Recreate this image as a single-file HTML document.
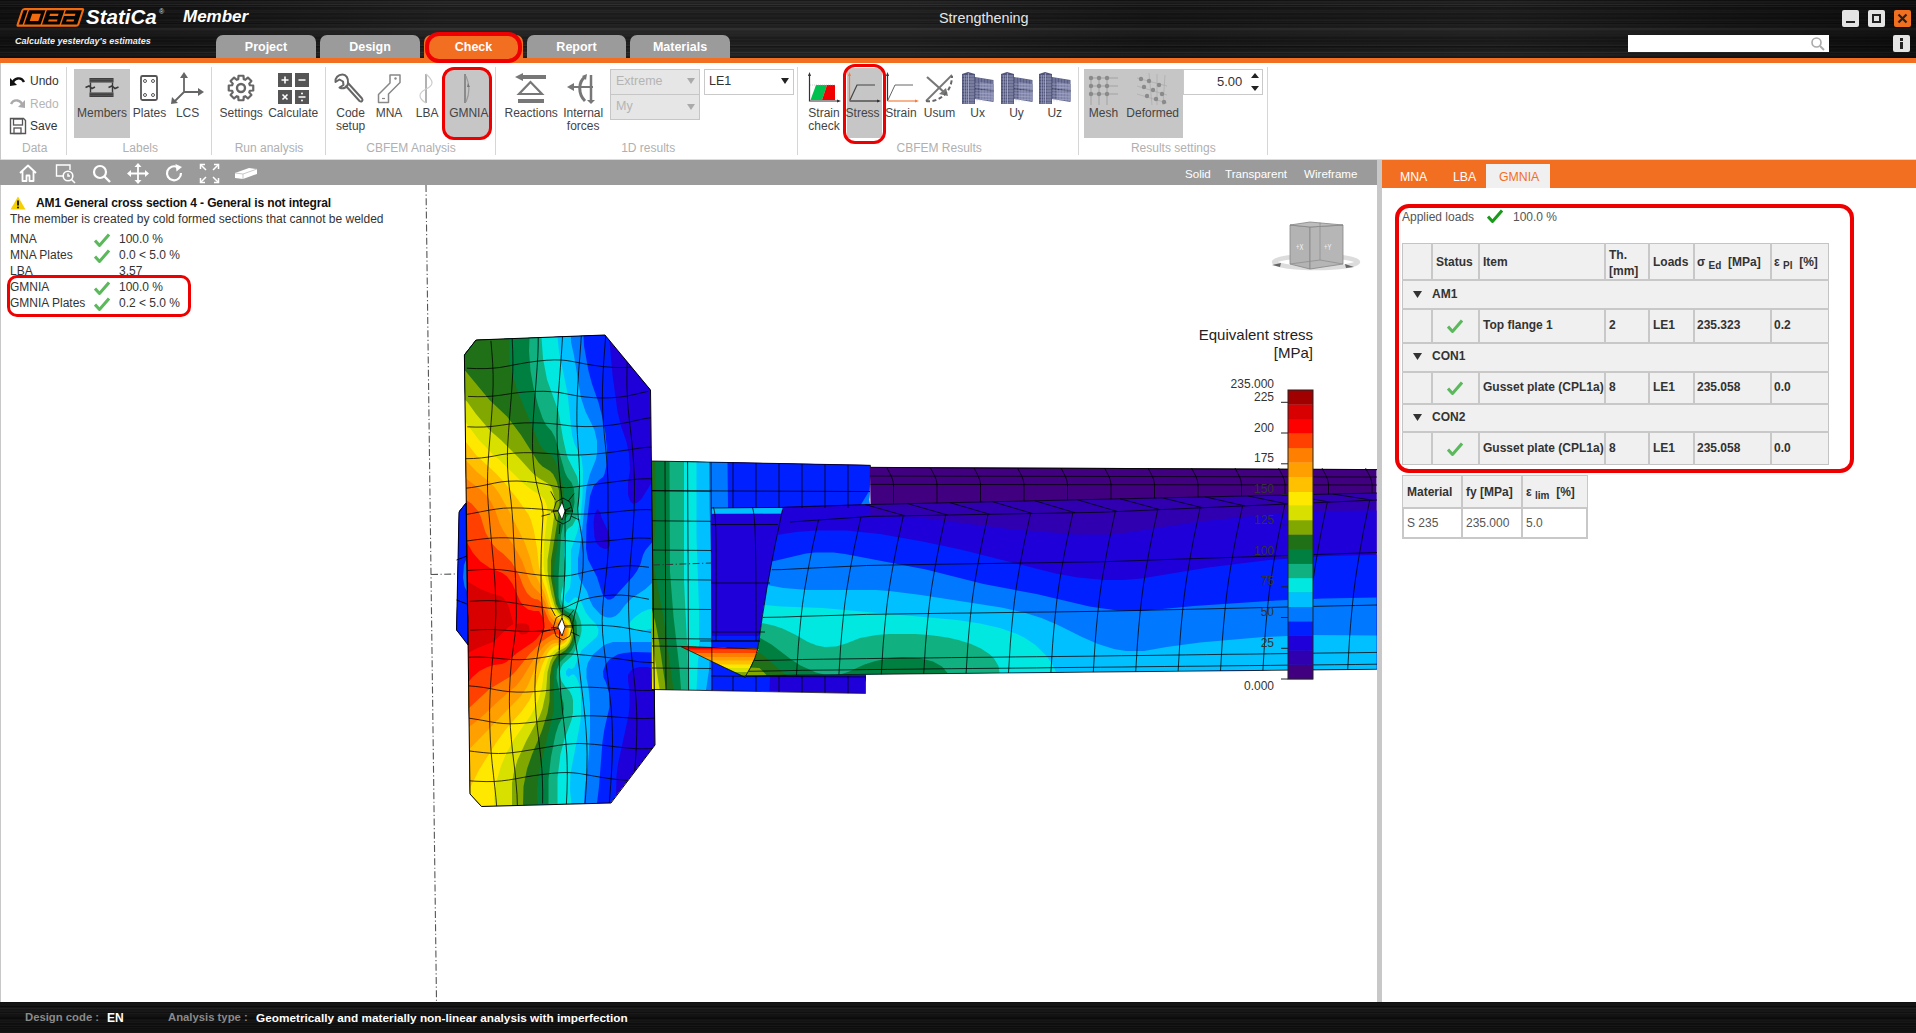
<!DOCTYPE html>
<html><head><meta charset="utf-8">
<style>
*{margin:0;padding:0;box-sizing:border-box}
html,body{width:1916px;height:1033px;overflow:hidden;background:#fff;font-family:"Liberation Sans",sans-serif;position:relative}
.a{position:absolute}
.dark{background:#0d0d0d;background-image:
repeating-linear-gradient(180deg,rgba(255,255,255,0) 0px,rgba(255,255,255,.05) 1px,rgba(255,255,255,0) 2px,rgba(0,0,0,0) 3px,rgba(255,255,255,.03) 5px,rgba(0,0,0,0) 7px);}
.tab{position:absolute;top:35px;height:24px;width:100px;background:#9b9b9b;border-radius:7px 7px 0 0;color:#fff;font-weight:bold;font-size:12.5px;text-align:center;line-height:24px}
.redbox{position:absolute;border:3.8px solid #ee0000;border-radius:11px}
.rl{position:absolute;font-size:12px;color:#444;white-space:nowrap}
.gl{position:absolute;font-size:12px;color:#b0b0b0;white-space:nowrap;top:141px}
.sep{position:absolute;top:67px;width:1px;height:88px;background:#d6d6d6}
.hl{position:absolute;background:#c6c6c6}
.lp{position:absolute;font-size:12px;color:#222;white-space:nowrap}
</style></head><body>
<!-- title bar -->
<div class="a" style="left:0;top:0;width:1916px;height:58px;background:linear-gradient(180deg,rgb(20,20,20) 0.0px,rgb(18,18,18) 0.5px,rgb(25,25,25) 1.0px,rgb(33,33,33) 1.5px,rgb(36,36,36) 2.0px,rgb(31,31,31) 2.5px,rgb(24,24,24) 3.0px,rgb(25,25,25) 3.5px,rgb(35,35,35) 4.0px,rgb(40,40,40) 4.5px,rgb(31,31,31) 5.0px,rgb(20,20,20) 5.5px,rgb(24,24,24) 6.0px,rgb(35,35,35) 6.5px,rgb(29,29,29) 7.0px,rgb(19,19,19) 7.5px,rgb(20,20,20) 8.0px,rgb(20,20,20) 8.5px,rgb(20,20,20) 9.0px,rgb(22,22,22) 9.5px,rgb(25,25,25) 10.0px,rgb(29,29,29) 10.5px,rgb(28,28,28) 11.0px,rgb(26,26,26) 11.5px,rgb(31,31,31) 12.0px,rgb(30,30,30) 12.5px,rgb(21,21,21) 13.0px,rgb(20,20,20) 13.5px,rgb(22,22,22) 14.0px,rgb(21,21,21) 14.5px,rgb(21,21,21) 15.0px,rgb(25,25,25) 15.5px,rgb(28,28,28) 16.0px,rgb(24,24,24) 16.5px,rgb(21,21,21) 17.0px,rgb(20,20,20) 17.5px,rgb(18,18,18) 18.0px,rgb(19,19,19) 18.5px,rgb(23,23,23) 19.0px,rgb(26,26,26) 19.5px,rgb(34,34,34) 20.0px,rgb(30,30,30) 20.5px,rgb(20,20,20) 21.0px,rgb(21,21,21) 21.5px,rgb(23,23,23) 22.0px,rgb(26,26,26) 22.5px,rgb(23,23,23) 23.0px,rgb(17,17,17) 23.5px,rgb(21,21,21) 24.0px,rgb(29,29,29) 24.5px,rgb(30,30,30) 25.0px,rgb(27,27,27) 25.5px,rgb(26,26,26) 26.0px,rgb(24,24,24) 26.5px,rgb(21,21,21) 27.0px,rgb(27,27,27) 27.5px,rgb(36,36,36) 28.0px,rgb(42,42,42) 28.5px,rgb(45,45,45) 29.0px,rgb(41,41,41) 29.5px,rgb(37,37,37) 30.0px,rgb(34,34,34) 30.5px,rgb(27,27,27) 31.0px,rgb(30,30,30) 31.5px,rgb(35,35,35) 32.0px,rgb(31,31,31) 32.5px,rgb(28,28,28) 33.0px,rgb(31,31,31) 33.5px,rgb(31,31,31) 34.0px,rgb(28,28,28) 34.5px,rgb(27,27,27) 35.0px,rgb(30,30,30) 35.5px,rgb(27,27,27) 36.0px,rgb(26,26,26) 36.5px,rgb(27,27,27) 37.0px,rgb(21,21,21) 37.5px,rgb(15,15,15) 38.0px,rgb(21,21,21) 38.5px,rgb(29,29,29) 39.0px,rgb(27,27,27) 39.5px,rgb(19,19,19) 40.0px,rgb(21,21,21) 40.5px,rgb(25,25,25) 41.0px,rgb(20,20,20) 41.5px,rgb(20,20,20) 42.0px,rgb(25,25,25) 42.5px,rgb(23,23,23) 43.0px,rgb(23,23,23) 43.5px,rgb(26,26,26) 44.0px,rgb(26,26,26) 44.5px,rgb(31,31,31) 45.0px,rgb(34,34,34) 45.5px,rgb(26,26,26) 46.0px,rgb(15,15,15) 46.5px,rgb(14,14,14) 47.0px,rgb(21,21,21) 47.5px,rgb(27,27,27) 48.0px,rgb(28,28,28) 48.5px,rgb(25,25,25) 49.0px,rgb(23,23,23) 49.5px,rgb(22,22,22) 50.0px,rgb(24,24,24) 50.5px,rgb(27,27,27) 51.0px,rgb(27,27,27) 51.5px,rgb(33,33,33) 52.0px,rgb(41,41,41) 52.5px,rgb(32,32,32) 53.0px,rgb(26,26,26) 53.5px,rgb(35,35,35) 54.0px,rgb(33,33,33) 54.5px,rgb(27,27,27) 55.0px,rgb(31,31,31) 55.5px,rgb(29,29,29) 56.0px,rgb(23,23,23) 56.5px,rgb(21,21,21) 57.0px,rgb(21,21,21) 57.5px)"></div><div class="a" style="left:0;top:0;width:1916px;height:58px;background:linear-gradient(90deg,rgba(0,0,0,.3) 0px,rgba(0,0,0,.1) 200px,rgba(255,255,255,.03) 450px,rgba(255,255,255,.03) 900px,rgba(0,0,0,.08) 1150px,rgba(255,255,255,.02) 1500px,rgba(0,0,0,.2) 1750px,rgba(0,0,0,.45) 1916px)"></div>
<!-- logo -->
<svg class="a" style="left:0;top:0" width="100" height="32" viewBox="0 0 100 32"><g transform="translate(0,26.8) skewX(-18.5) translate(0,-26.8)"><rect x="16.9" y="9.1" width="60.6" height="16.6" rx="1.5" fill="#050505" stroke="#f06a10" stroke-width="2.2"/><path d="M22.7 10V25M40.6 10V25M59.6 10V25" stroke="#f06a10" stroke-width="1.5"/><rect x="27.8" y="13.8" width="8.7" height="7.3" fill="#f06a10"/><rect x="45.7" y="13.8" width="8.5" height="2.1" fill="#f06a10"/><rect x="46.3" y="19.4" width="8.8" height="2.1" fill="#f06a10"/><rect x="60" y="13.8" width="11.1" height="2.1" fill="#f06a10"/><rect x="64.3" y="19.4" width="7.5" height="2.1" fill="#f06a10"/></g></svg>
<div class="a" style="left:86px;top:5px;font:italic bold 20.5px 'Liberation Sans',sans-serif;color:#fff">StatiCa</div>
<div class="a" style="left:159px;top:8px;font-size:7px;color:#ddd">&reg;</div>
<div class="a" style="left:183px;top:7px;font:italic bold 17px 'Liberation Sans',sans-serif;color:#fff">Member</div>
<div class="a" style="left:15px;top:36px;font:italic bold 9px 'Liberation Sans',sans-serif;color:#eee">Calculate yesterday's estimates</div>
<div class="a" style="left:939px;top:10px;font-size:14.4px;color:#e6e6e6">Strengthening</div>
<!-- window buttons -->
<div class="a" style="left:1842px;top:10px;width:17px;height:17px;background:#e4e4e4;border-radius:2px"><div class="a" style="left:4px;top:11px;width:9px;height:2px;background:#222"></div></div>
<div class="a" style="left:1868px;top:10px;width:17px;height:17px;background:#e4e4e4;border-radius:2px"><div class="a" style="left:4px;top:4px;width:9px;height:9px;border:2px solid #222"></div></div>
<div class="a" style="left:1894px;top:10px;width:17px;height:17px;background:#f07020;border-radius:2px"><svg class="a" style="left:0;top:0" width="17" height="17"><path d="M4.5 4.5L12.5 12.5M12.5 4.5L4.5 12.5" stroke="#222" stroke-width="2.2"/></svg></div>
<div class="a" style="left:1628px;top:35px;width:201px;height:17px;background:#fff"><svg class="a" style="left:182px;top:1px" width="16" height="15"><circle cx="6.5" cy="6.5" r="4.5" fill="none" stroke="#aaa" stroke-width="1.6"/><path d="M10 10L14 14" stroke="#aaa" stroke-width="2"/></svg></div>
<div class="a" style="left:1893px;top:35px;width:17px;height:17px;background:#e4e4e4;border-radius:2px"><div class="a" style="left:7px;top:3px;width:3px;height:3px;background:#222"></div><div class="a" style="left:7px;top:7px;width:3px;height:7px;background:#222"></div></div>
<!-- tabs -->
<div class="tab" style="left:216px">Project</div>
<div class="tab" style="left:320px">Design</div>
<div class="tab" style="left:424px;width:99px;background:#f26f22">Check</div>
<div class="tab" style="left:527px;width:99px">Report</div>
<div class="tab" style="left:630px">Materials</div>
<div class="a" style="left:0;top:58px;width:1916px;height:5px;background:#f26f22"></div>
<div class="redbox" style="left:425px;top:32px;width:97px;height:31px;border-radius:14px;border-width:4px"></div>
<!-- ribbon -->
<div class="a" style="left:0;top:159px;width:1916px;height:1px;background:#d7dde3"></div>
<div class="a" style="left:0;top:63px;width:1px;height:939px;background:#c8c8c8"></div>
<div class="sep" style="left:66px"></div>
<div class="sep" style="left:211px"></div>
<div class="sep" style="left:325px"></div>
<div class="sep" style="left:495px"></div>
<div class="sep" style="left:797px"></div>
<div class="sep" style="left:1078px"></div>
<div class="sep" style="left:1267px"></div>
<div class="hl" style="left:74px;top:69px;width:56px;height:69px"></div>
<div class="hl" style="left:445px;top:70px;width:44px;height:67px"></div>
<div class="hl" style="left:847px;top:68px;width:35px;height:70px"></div>
<div class="hl" style="left:1084px;top:69px;width:99px;height:69px"></div>
<div class="rl" style="left:30px;top:74px;font-size:12px;color:#333">Undo</div>
<div class="rl" style="left:30px;top:97px;font-size:12px;color:#b5b5b5">Redo</div>
<div class="rl" style="left:30px;top:119px;font-size:12px;color:#333">Save</div>
<svg class="a" style="left:9px;top:75px" width="17" height="12" viewBox="0 0 17 12"><path d="M3 9 C5 3 12 1 15 7" fill="none" stroke="#111" stroke-width="2.4"/><path d="M1 3 L1 11 L8 10 Z" fill="#111"/></svg>
<svg class="a" style="left:9px;top:97px" width="17" height="12" viewBox="0 0 17 12"><path d="M14 9 C12 3 5 1 2 7" fill="none" stroke="#aaa" stroke-width="2.4"/><path d="M16 3 L16 11 L9 10 Z" fill="#aaa"/></svg>
<svg class="a" style="left:9px;top:117px" width="18" height="18" viewBox="0 0 18 18"><path d="M1.5 1.5h13l2 2v13h-15z" fill="none" stroke="#555" stroke-width="1.4"/><rect x="4.5" y="2" width="9" height="6" fill="none" stroke="#555" stroke-width="1.3"/><rect x="5" y="11" width="7" height="5.5" fill="none" stroke="#555" stroke-width="1.3"/></svg>
<svg class="a" style="left:85px;top:76px" width="34" height="23" viewBox="0 0 34 23"><rect x="4.5" y="2" width="24" height="4.5" fill="#3a3a3a"/><rect x="4.5" y="16.5" width="24" height="4.5" fill="#3a3a3a"/><path d="M4.5 3.3H28.5M4.5 5.2H28.5M4.5 17.8H28.5M4.5 19.7H28.5" stroke="#777" stroke-width=".5"/><path d="M5.5 6.5V16.5M27.5 6.5V16.5" stroke="#3a3a3a" stroke-width="1.4"/><path d="M0.5 11.5L4 10L7 12.5L10 11" fill="none" stroke="#3a3a3a" stroke-width="1.6"/><path d="M23.5 11.5L27 10L30 12.5L33.5 11" fill="none" stroke="#3a3a3a" stroke-width="1.6"/></svg>
<svg class="a" style="left:139px;top:74px" width="20" height="28" viewBox="0 0 20 28"><rect x="2" y="2" width="16" height="24" rx="1.5" fill="none" stroke="#555" stroke-width="1.8"/><circle cx="6" cy="7" r="1.5" fill="none" stroke="#555"/><circle cx="14" cy="7" r="1.5" fill="none" stroke="#555"/><circle cx="6" cy="21" r="1.5" fill="none" stroke="#555"/><circle cx="14" cy="21" r="1.5" fill="none" stroke="#555"/></svg>
<svg class="a" style="left:170px;top:72px" width="34" height="33" viewBox="0 0 34 33"><path d="M14 20V5M14 20H29M14 20L4 30" stroke="#666" stroke-width="1.8" fill="none"/><path d="M10 6L14 0L18 6Z M28 16L34 20L28 24Z M2 25L1 32L8 31Z" fill="#666"/></svg>
<div class="rl" style="left:62.0px;top:106px;width:80px;text-align:center">Members</div>
<div class="rl" style="left:109.5px;top:106px;width:80px;text-align:center">Plates</div>
<div class="rl" style="left:147.6px;top:106px;width:80px;text-align:center">LCS</div>
<div class="rl" style="left:201.2px;top:106px;width:80px;text-align:center">Settings</div>
<div class="rl" style="left:253.2px;top:106px;width:80px;text-align:center">Calculate</div>
<div class="rl" style="left:310.6px;top:106px;width:80px;text-align:center">Code</div>
<div class="rl" style="left:349.0px;top:106px;width:80px;text-align:center">MNA</div>
<div class="rl" style="left:387.2px;top:106px;width:80px;text-align:center">LBA</div>
<div class="rl" style="left:428.8px;top:106px;width:80px;text-align:center">GMNIA</div>
<div class="rl" style="left:491.2px;top:106px;width:80px;text-align:center">Reactions</div>
<div class="rl" style="left:543.2px;top:106px;width:80px;text-align:center">Internal</div>
<div class="rl" style="left:784.0px;top:106px;width:80px;text-align:center">Strain</div>
<div class="rl" style="left:822.6px;top:106px;width:80px;text-align:center">Stress</div>
<div class="rl" style="left:860.9px;top:106px;width:80px;text-align:center">Strain</div>
<div class="rl" style="left:899.5px;top:106px;width:80px;text-align:center">Usum</div>
<div class="rl" style="left:937.7px;top:106px;width:80px;text-align:center">Ux</div>
<div class="rl" style="left:976.5px;top:106px;width:80px;text-align:center">Uy</div>
<div class="rl" style="left:1014.8px;top:106px;width:80px;text-align:center">Uz</div>
<div class="rl" style="left:1063.5px;top:106px;width:80px;text-align:center">Mesh</div>
<div class="rl" style="left:1112.7px;top:106px;width:80px;text-align:center">Deformed</div>
<div class="rl" style="left:310.6px;top:119px;width:80px;text-align:center">setup</div>
<div class="rl" style="left:543.2px;top:119px;width:80px;text-align:center">forces</div>
<div class="rl" style="left:784.0px;top:119px;width:80px;text-align:center">check</div>
<div class="gl" style="left:-25.3px;width:120px;text-align:center">Data</div>
<div class="gl" style="left:80.3px;width:120px;text-align:center">Labels</div>
<div class="gl" style="left:209.0px;width:120px;text-align:center">Run analysis</div>
<div class="gl" style="left:351.0px;width:120px;text-align:center">CBFEM Analysis</div>
<div class="gl" style="left:588.2px;width:120px;text-align:center">1D results</div>
<div class="gl" style="left:879.2px;width:120px;text-align:center">CBFEM Results</div>
<div class="gl" style="left:1113.3px;width:120px;text-align:center">Results settings</div>
<svg class="a" style="left:227px;top:74px" width="28" height="28" viewBox="0 0 28 28"><path d="M22.88 11.25 L26.25 11.52 L26.25 16.48 L22.88 16.75 L22.23 18.34 L24.42 20.91 L20.91 24.42 L18.34 22.23 L16.75 22.88 L16.48 26.25 L11.52 26.25 L11.25 22.88 L9.66 22.23 L7.09 24.42 L3.58 20.91 L5.77 18.34 L5.12 16.75 L1.75 16.48 L1.75 11.52 L5.12 11.25 L5.77 9.66 L3.58 7.09 L7.09 3.58 L9.66 5.77 L11.25 5.12 L11.52 1.75 L16.48 1.75 L16.75 5.12 L18.34 5.77 L20.91 3.58 L24.42 7.09 L22.23 9.66Z" fill="none" stroke="#666" stroke-width="2.2" stroke-linejoin="round"/><circle cx="14" cy="14" r="4" fill="none" stroke="#666" stroke-width="2.4"/></svg>
<svg class="a" style="left:278px;top:73px" width="31" height="31" viewBox="0 0 31 31"><rect x="0" y="0" width="14" height="14" fill="#555"/><rect x="17" y="0" width="14" height="14" fill="#555"/><rect x="0" y="17" width="14" height="14" fill="#555"/><rect x="17" y="17" width="14" height="14" fill="#555"/><path d="M7 3.5v7M3.5 7h7M20.5 7h7M4.5 21.5l5 5M9.5 21.5l-5 5M20.5 24h7" stroke="#fff" stroke-width="1.6"/><circle cx="24" cy="20.5" r="1" fill="#fff"/><circle cx="24" cy="27.5" r="1" fill="#fff"/></svg>
<svg class="a" style="left:334px;top:73px" width="32" height="31" viewBox="0 0 32 31"><path d="M8.5 1.5 C4 1.5 1 5 1.5 9 L5.5 6.5 L9 8.5 L9.5 12 L5.5 14.5 C9.5 16.5 14 14 14 10 L28 25.5 C29.5 27.5 27.5 29.5 25.5 28 L11.5 12.5 M14 10 C14.5 5 12 1.5 8.5 1.5" fill="none" stroke="#666" stroke-width="2" stroke-linejoin="round"/></svg>
<svg class="a" style="left:377px;top:73px" width="25" height="31" viewBox="0 0 25 31"><path d="M13 2 H23 V9.5 L11.5 21 V29.5 H1.5 V21.5 L13 10 Z" fill="none" stroke="#888" stroke-width="1.5" stroke-linejoin="round"/><circle cx="18.5" cy="5.5" r="1.2" fill="#888"/><path d="M5 25.5H8" stroke="#888" stroke-width="1.2"/></svg>
<svg class="a" style="left:417px;top:73px" width="18" height="31" viewBox="0 0 18 31"><path d="M9 1v29" stroke="#999" stroke-width="1.5"/><path d="M9 1 C17 8 17 12 9 16 C1 20 1 25 9 30" fill="none" stroke="#ccc" stroke-width="1.2"/></svg>
<svg class="a" style="left:458px;top:73px" width="18" height="31" viewBox="0 0 18 31"><path d="M7 1v29" stroke="#777" stroke-width="1.5"/><path d="M8 3 C12 12 12 20 8 29" fill="none" stroke="#999" stroke-width="1.2"/><path d="M10 10l2 4-3 0z" fill="#777"/></svg>
<svg class="a" style="left:515px;top:72px" width="32" height="32" viewBox="0 0 32 32"><path d="M0 5L8 1V9Z" fill="#777"/><rect x="6" y="3" width="25" height="4" fill="#777"/><path d="M15.5 10L4 22H27Z" fill="none" stroke="#777" stroke-width="2.2"/><rect x="3" y="27" width="26" height="4" fill="#777"/></svg>
<svg class="a" style="left:567px;top:74px" width="33" height="30" viewBox="0 0 33 30"><path d="M0 13L7 9V17Z" fill="#777"/><path d="M6 13H26" stroke="#777" stroke-width="2"/><path d="M24 1V28" stroke="#777" stroke-width="2.5"/><path d="M20 26L24 30L28 26Z" fill="#777"/><path d="M18 3 C11 8 11 20 18 27" fill="none" stroke="#777" stroke-width="3"/><path d="M15 2L20 0L19 6Z" fill="#777"/></svg>
<div class="a" style="left:610px;top:69px;width:90px;height:26px;background:#e6e6e6;border:1px solid #c6c6c6"></div>
<div class="a" style="left:610px;top:94px;width:90px;height:26px;background:#e6e6e6;border:1px solid #c6c6c6"></div>
<div class="rl" style="left:616px;top:74px;font-size:12.5px;color:#b4b4b4">Extreme</div>
<div class="rl" style="left:616px;top:99px;font-size:12.5px;color:#b4b4b4">My</div>
<svg class="a" style="left:687px;top:78px" width="8" height="6"><path d="M0 0H8L4 6Z" fill="#aaa"/></svg>
<svg class="a" style="left:687px;top:104px" width="8" height="6"><path d="M0 0H8L4 6Z" fill="#aaa"/></svg>
<div class="a" style="left:704px;top:69px;width:90px;height:26px;background:#fff;border:1px solid #c9c9c9"></div>
<div class="rl" style="left:709px;top:74px;font-size:12.5px;color:#333">LE1</div>
<svg class="a" style="left:781px;top:78px" width="8" height="6"><path d="M0 0H8L4 6Z" fill="#222"/></svg>
<svg class="a" style="left:808px;top:72px" width="33" height="32" viewBox="0 0 33 32"><path d="M1.5 2V29H31" fill="none" stroke="#333" stroke-width="1.2"/><path d="M0 4L1.5 0L3 4ZM29 27.5L33 29L29 30.5Z" fill="#333"/><path d="M2.5 28L8 13H19L14 28Z" fill="#00c050"/><path d="M14 28L19 13H27V28Z" fill="#f00000"/><path d="M2 13H28" stroke="#aaa" stroke-width=".6" stroke-dasharray="1 1"/></svg>
<svg class="a" style="left:848px;top:72px" width="33" height="32" viewBox="0 0 33 32"><path d="M1.5 2V29" stroke="#f08040" stroke-width="1.2"/><path d="M0 4L1.5 0L3 4Z" fill="#f08040"/><path d="M1.5 29H31" stroke="#333" stroke-width="1.2"/><path d="M29 27.5L33 29L29 30.5Z" fill="#333"/><path d="M2 28L9 13H27" fill="none" stroke="#444" stroke-width="1.2"/></svg>
<svg class="a" style="left:886px;top:72px" width="33" height="32" viewBox="0 0 33 32"><path d="M1.5 2V29" stroke="#333" stroke-width="1.2"/><path d="M0 4L1.5 0L3 4Z" fill="#333"/><path d="M1.5 29H31" stroke="#f08040" stroke-width="1.2"/><path d="M29 27.5L33 29L29 30.5Z" fill="#f08040"/><path d="M2 28L9 13H27" fill="none" stroke="#666" stroke-width="1"/></svg>
<svg class="a" style="left:924px;top:73px" width="31" height="31" viewBox="0 0 31 31"><path d="M3 4L21 20" stroke="#777" stroke-width="2.2"/><path d="M24 23L15 21L22 15Z" fill="#777"/><path d="M2 28L28 2" stroke="#777" stroke-width="1.8"/><path d="M2 28 C14 30 28 20 28 3" fill="none" stroke="#666" stroke-width="2" stroke-dasharray="4 2.5"/></svg>
<svg class="a" style="left:962px;top:72px" width="32" height="32" viewBox="0 0 32 32"><path d="M0 2L6 0L13 2V32H0Z" fill="#50547a"/><path d="M6.5 1V32" stroke="#8a8db0" stroke-width="1.2"/><path d="M13 5L31.5 8V30L13 27Z" fill="#5a5e85"/><path d="M18 10L31.5 12V29L18 27Z" fill="#7b7fa5"/><path d="M13 17L31.5 19" stroke="#3a3d5c" stroke-width="1.5"/><path d="M0.5 4 H12.5 M0.5 7 H12.5 M0.5 10 H12.5 M0.5 13 H12.5 M0.5 16 H12.5 M0.5 19 H12.5 M0.5 22 H12.5 M0.5 25 H12.5 M0.5 28 H12.5 M0.5 31 H12.5 M2.5 3 V31.5 M4.5 3 V31.5 M6.5 3 V31.5 M9.0 3 V31.5 M11.0 3 V31.5 M13 12 L31.5 13.0 M13 15 L31.5 16.0 M13 18 L31.5 19.0 M13 21 L31.5 22.0 M13 24 L31.5 25.0 M13 27 L31.5 28.0 M15 5.4 V29.5 M18 6.0 V29.5 M21 6.6 V29.5 M24 7.2 V29.5 M27 7.8 V29.5 M30 8.4 V29.5 " stroke="#b8bbd6" stroke-width=".45" fill="none"/></svg>
<svg class="a" style="left:1001px;top:72px" width="32" height="32" viewBox="0 0 32 32"><path d="M0 2L6 0L13 2V32H0Z" fill="#50547a"/><path d="M6.5 1V32" stroke="#8a8db0" stroke-width="1.2"/><path d="M13 5L31.5 8V30L13 27Z" fill="#5a5e85"/><path d="M18 10L31.5 12V29L18 27Z" fill="#7b7fa5"/><path d="M13 17L31.5 19" stroke="#3a3d5c" stroke-width="1.5"/><path d="M0.5 4 H12.5 M0.5 7 H12.5 M0.5 10 H12.5 M0.5 13 H12.5 M0.5 16 H12.5 M0.5 19 H12.5 M0.5 22 H12.5 M0.5 25 H12.5 M0.5 28 H12.5 M0.5 31 H12.5 M2.5 3 V31.5 M4.5 3 V31.5 M6.5 3 V31.5 M9.0 3 V31.5 M11.0 3 V31.5 M13 12 L31.5 13.0 M13 15 L31.5 16.0 M13 18 L31.5 19.0 M13 21 L31.5 22.0 M13 24 L31.5 25.0 M13 27 L31.5 28.0 M15 5.4 V29.5 M18 6.0 V29.5 M21 6.6 V29.5 M24 7.2 V29.5 M27 7.8 V29.5 M30 8.4 V29.5 " stroke="#b8bbd6" stroke-width=".45" fill="none"/></svg>
<svg class="a" style="left:1039px;top:72px" width="32" height="32" viewBox="0 0 32 32"><path d="M0 2L6 0L13 2V32H0Z" fill="#50547a"/><path d="M6.5 1V32" stroke="#8a8db0" stroke-width="1.2"/><path d="M13 5L31.5 8V30L13 27Z" fill="#5a5e85"/><path d="M18 10L31.5 12V29L18 27Z" fill="#7b7fa5"/><path d="M13 17L31.5 19" stroke="#3a3d5c" stroke-width="1.5"/><path d="M0.5 4 H12.5 M0.5 7 H12.5 M0.5 10 H12.5 M0.5 13 H12.5 M0.5 16 H12.5 M0.5 19 H12.5 M0.5 22 H12.5 M0.5 25 H12.5 M0.5 28 H12.5 M0.5 31 H12.5 M2.5 3 V31.5 M4.5 3 V31.5 M6.5 3 V31.5 M9.0 3 V31.5 M11.0 3 V31.5 M13 12 L31.5 13.0 M13 15 L31.5 16.0 M13 18 L31.5 19.0 M13 21 L31.5 22.0 M13 24 L31.5 25.0 M13 27 L31.5 28.0 M15 5.4 V29.5 M18 6.0 V29.5 M21 6.6 V29.5 M24 7.2 V29.5 M27 7.8 V29.5 M30 8.4 V29.5 " stroke="#b8bbd6" stroke-width=".45" fill="none"/></svg>
<svg class="a" style="left:1088px;top:73px" width="32" height="32" viewBox="0 0 32 32"><g stroke="#999" stroke-width=".8"><path d="M3 5H30M3 13H30M3 21H30M3 5V32M11 5V32M19 5V32"/></g><g fill="#8a8a8a"><circle cx="3" cy="5" r="2.2"/><circle cx="11" cy="5" r="2.2"/><circle cx="19" cy="5" r="2.2"/><circle cx="3" cy="13" r="2.2"/><circle cx="11" cy="13" r="2.2"/><circle cx="19" cy="13" r="2.2"/><circle cx="3" cy="21" r="2.2"/><circle cx="11" cy="21" r="2.2"/><circle cx="19" cy="21" r="2.2"/></g></svg>
<svg class="a" style="left:1137px;top:73px" width="32" height="32" viewBox="0 0 32 32"><g stroke="#aaa" stroke-width=".7"><path d="M0 5L30 13M0 13L30 22M0 21L30 30M12 0L15 32M20 1L20 32M28 2L26 32"/></g><g fill="#8a8a8a"><circle cx="4" cy="6" r="2.2"/><circle cx="12" cy="8" r="2.2"/><circle cx="22" cy="12" r="2.2"/><circle cx="7" cy="14" r="2.2"/><circle cx="16" cy="17" r="2.2"/><circle cx="25" cy="21" r="2.2"/><circle cx="10" cy="23" r="2.2"/><circle cx="19" cy="26" r="2.2"/><circle cx="27" cy="29" r="2.2"/></g></svg>
<div class="a" style="left:1183px;top:69px;width:80px;height:26px;background:#fff;border:1px solid #c9c9c9"></div>
<div class="rl" style="left:1217px;top:74px;font-size:13px;color:#333">5.00</div>
<svg class="a" style="left:1250px;top:72px" width="10" height="20"><path d="M1 6H9L5 1Z M1 14H9L5 19Z" fill="#222"/></svg>
<div class="redbox" style="left:442px;top:67px;width:50px;height:73px;border-radius:12px"></div>
<div class="redbox" style="left:843px;top:64px;width:43px;height:80px;border-radius:12px"></div>
<!-- view toolbar -->
<div class="a" style="left:0;top:160px;width:1377px;height:25px;background:#9b9b9b"></div>
<div class="a" style="left:1377px;top:160px;width:5px;height:842px;background:#c8c8c8"></div>
<div class="a" style="left:1382px;top:160px;width:534px;height:28px;background:#f26f22"></div>
<!-- view toolbar icons -->
<svg class="a" style="left:18px;top:163px" width="20" height="20" viewBox="0 0 20 20"><path d="M2 10L10 2.5L18 10M4.5 8V18H8.5V12.5H11.5V18H15.5V8" fill="none" stroke="#fff" stroke-width="1.8" stroke-linejoin="round"/></svg>
<svg class="a" style="left:55px;top:163px" width="22" height="21" viewBox="0 0 22 21"><path d="M8 13H1.5V2H15V7" fill="none" stroke="#fff" stroke-width="1.4"/><circle cx="13" cy="13" r="4.8" fill="none" stroke="#fff" stroke-width="1.6"/><path d="M16.5 16.5L20 20M13 10.5V13H15" stroke="#fff" stroke-width="1.5" fill="none"/></svg>
<svg class="a" style="left:92px;top:164px" width="20" height="20" viewBox="0 0 20 20"><circle cx="8" cy="8" r="6" fill="none" stroke="#fff" stroke-width="2.2"/><path d="M12.5 12.5L18 18" stroke="#fff" stroke-width="2.4"/></svg>
<svg class="a" style="left:127px;top:163px" width="22" height="21" viewBox="0 0 22 21"><path d="M11 2V19M2 10.5H20" stroke="#fff" stroke-width="1.8"/><path d="M11 0L7.5 4H14.5ZM11 21L7.5 17H14.5ZM0 10.5L4 7V14ZM22 10.5L18 7V14Z" fill="#fff"/></svg>
<svg class="a" style="left:165px;top:164px" width="20" height="20" viewBox="0 0 20 20"><path d="M16 9A7 7 0 1 1 12.5 3.2" fill="none" stroke="#fff" stroke-width="2.2"/><path d="M10.5 0L17 3L11.5 7.5Z" fill="#fff"/></svg>
<svg class="a" style="left:199px;top:163px" width="21" height="21" viewBox="0 0 21 21"><g stroke="#fff" stroke-width="1.5" fill="none"><path d="M2 2L7 7M19 2L14 7M2 19L7 14M19 19L14 14"/><path d="M1.5 6V1.5H6M15 1.5H19.5V6M1.5 15V19.5H6M15 19.5H19.5V15"/></g></svg>
<svg class="a" style="left:234px;top:165px" width="24" height="16" viewBox="0 0 24 16"><path d="M1 8L15 3L23 4L23 9L9 14L1 13Z" fill="#fff"/><path d="M1 8L9 9L23 4M9 9V14" stroke="#bbb" stroke-width=".8" fill="none"/></svg>
<div class="a" style="left:1185px;top:167px;font-size:11.6px;color:#fff">Solid</div>
<div class="a" style="left:1225px;top:167px;font-size:11.6px;color:#fff">Transparent</div>
<div class="a" style="left:1304px;top:167px;font-size:11.6px;color:#fff">Wireframe</div>
<!-- right tabs -->
<div class="a" style="left:1486px;top:164px;width:64px;height:24px;background:#f0f0f0"></div>
<div class="a" style="left:1400px;top:170px;font-size:12.3px;color:#fff">MNA</div>
<div class="a" style="left:1453px;top:170px;font-size:12.3px;color:#fff">LBA</div>
<div class="a" style="left:1499px;top:170px;font-size:12.3px;color:#f26f22">GMNIA</div>

<!-- status -->
<div class="a" style="left:0;top:1002px;width:1916px;height:31px;background:linear-gradient(180deg,rgb(17,17,17) 0.0px,rgb(16,16,16) 0.5px,rgb(15,15,15) 1.0px,rgb(21,21,21) 1.5px,rgb(24,24,24) 2.0px,rgb(21,21,21) 2.5px,rgb(21,21,21) 3.0px,rgb(21,21,21) 3.5px,rgb(17,17,17) 4.0px,rgb(11,11,11) 4.5px,rgb(12,12,12) 5.0px,rgb(21,21,21) 5.5px,rgb(27,27,27) 6.0px,rgb(31,31,31) 6.5px,rgb(28,28,28) 7.0px,rgb(21,21,21) 7.5px,rgb(20,20,20) 8.0px,rgb(23,23,23) 8.5px,rgb(23,23,23) 9.0px,rgb(24,24,24) 9.5px,rgb(21,21,21) 10.0px,rgb(16,16,16) 10.5px,rgb(18,18,18) 11.0px,rgb(26,26,26) 11.5px,rgb(23,23,23) 12.0px,rgb(19,19,19) 12.5px,rgb(20,20,20) 13.0px,rgb(19,19,19) 13.5px,rgb(18,18,18) 14.0px,rgb(17,17,17) 14.5px,rgb(17,17,17) 15.0px,rgb(13,13,13) 15.5px,rgb(9,9,9) 16.0px,rgb(11,11,11) 16.5px,rgb(14,14,14) 17.0px,rgb(19,19,19) 17.5px,rgb(22,22,22) 18.0px,rgb(22,22,22) 18.5px,rgb(20,20,20) 19.0px,rgb(18,18,18) 19.5px,rgb(21,21,21) 20.0px,rgb(23,23,23) 20.5px,rgb(19,19,19) 21.0px,rgb(14,14,14) 21.5px,rgb(14,14,14) 22.0px,rgb(15,15,15) 22.5px,rgb(20,20,20) 23.0px,rgb(23,23,23) 23.5px,rgb(16,16,16) 24.0px,rgb(12,12,12) 24.5px,rgb(17,17,17) 25.0px,rgb(21,21,21) 25.5px,rgb(18,18,18) 26.0px,rgb(14,14,14) 26.5px,rgb(14,14,14) 27.0px,rgb(18,18,18) 27.5px,rgb(21,21,21) 28.0px,rgb(17,17,17) 28.5px,rgb(16,16,16) 29.0px,rgb(18,18,18) 29.5px,rgb(20,20,20) 30.0px,rgb(22,22,22) 30.5px)"></div>
<!-- FEM_START --><svg class="a" style="left:0;top:0" width="1916" height="1033" viewBox="0 0 1916 1033"><path fill="#400080" d="M464.5 354.5 466.5 520.0 465.5 520.0 465.5 503.5 459.0 511.5 456.5 630.0 468.0 644.5 470.0 794.0 481.5 806.0 610.5 802.5 654.5 745.0 654.5 689.0 865.0 693.0 865.0 682.0 866.0 674.0 1376.5 669.0 1376.5 469.5 870.5 467.5 870.0 465.5 867.5 465.0 652.0 461.0 651.5 488.5 650.0 389.5 604.5 335.0 476.0 340.0ZM561.5 618.0 562.5 618.5 565.0 626.0 562.0 635.5 561.0 635.0 557.5 627.0ZM561.5 502.0 562.5 502.5 565.0 510.0 562.0 519.5 561.0 519.0 557.5 511.0ZM870.0 476.0 870.5 504.0 869.5 504.5 869.0 499.5Z"/>
<path fill="#3000b0" d="M464.5 354.5 466.5 520.0 465.5 520.0 465.5 503.5 459.0 511.5 456.5 630.0 468.0 644.5 470.0 794.0 481.5 806.0 610.5 802.5 654.5 745.0 654.5 689.0 865.0 693.0 865.0 682.0 866.0 674.0 1376.5 669.0 1376.5 493.0 869.5 504.5 869.0 499.5 870.0 465.5 652.0 461.0 651.5 488.5 650.0 389.5 604.5 335.0 476.0 340.0ZM561.5 618.0 562.5 618.5 565.0 626.0 562.0 635.5 561.0 635.0 557.5 627.0ZM561.5 502.0 562.5 502.5 565.0 510.0 562.0 519.5 561.0 519.0 557.5 511.0Z"/>
<path fill="#2000d8" d="M464.5 354.5 466.5 520.0 465.5 520.0 465.5 503.5 459.0 511.5 456.5 630.0 468.0 644.5 470.0 794.0 481.5 806.0 610.5 802.5 654.5 745.0 654.5 689.0 865.0 693.0 865.0 682.0 866.0 674.0 1376.5 669.0 1376.5 510.5 1326.5 511.0 1267.0 514.5 1195.5 522.0 1121.5 533.5 1109.0 534.5 1075.5 534.5 1009.0 529.0 911.0 516.5 870.5 516.5 870.0 504.5 869.0 504.0 870.0 465.5 867.5 465.0 652.0 461.0 651.5 488.5 650.0 389.5 604.5 335.0 476.0 340.0ZM561.5 618.0 562.5 618.5 565.0 626.0 562.0 635.5 561.0 635.0 557.5 627.0ZM561.5 502.0 562.5 502.5 565.0 510.0 562.0 519.5 561.0 519.0 557.5 511.0Z"/>
<path fill="#0020ff" d="M464.5 354.5 466.5 520.0 465.5 520.0 465.5 503.5 459.0 511.5 456.5 630.0 468.0 644.5 470.0 794.0 481.5 806.0 610.5 802.5 616.0 795.5 616.5 776.0 618.0 764.0 628.5 715.5 629.5 706.0 629.5 690.0 628.0 681.0 628.0 675.0 631.0 670.5 635.5 668.0 639.5 667.0 647.5 667.0 652.0 668.5 652.0 689.0 745.5 691.0 769.5 691.0 770.0 675.5 865.5 675.5 866.0 674.0 1376.5 669.0 1376.5 555.0 1326.5 556.0 1269.0 560.0 1208.0 567.5 1141.5 578.5 1123.0 580.0 1104.5 580.0 1078.0 577.5 1055.5 573.5 960.5 549.5 922.5 541.5 880.0 534.0 846.0 530.5 816.5 530.5 796.0 532.0 777.0 535.0 767.5 583.5 761.5 621.0 760.0 635.0 759.0 636.0 712.0 636.0 711.5 514.0 781.0 513.5 782.5 509.0 784.0 511.5 781.5 507.5 786.5 506.5 869.0 504.0 870.0 465.5 652.0 461.0 652.0 488.0 651.0 488.0 651.0 483.5 641.5 499.0 637.0 503.0 632.5 503.5 630.0 501.0 628.0 494.5 628.0 483.0 630.0 470.0 629.0 454.0 626.5 442.0 621.0 426.0 617.5 411.5 612.5 375.0 609.5 340.5 604.5 335.0 476.0 340.0ZM561.5 618.0 562.5 618.5 565.0 626.0 562.0 635.5 561.0 635.0 557.5 627.0ZM597.0 509.5 598.0 509.5 600.0 512.0 601.5 517.5 607.5 530.0 610.0 538.0 610.0 544.5 609.0 547.0 606.5 549.0 603.0 548.5 599.5 546.5 596.5 543.0 594.5 537.5 593.5 522.5 594.5 514.5ZM561.5 502.0 562.5 502.5 565.0 510.0 562.0 519.5 561.0 519.0 557.5 511.0Z"/>
<path fill="#0078ff" d="M869.5 490.5 861.0 504.5 869.0 504.0ZM464.5 354.5 467.0 557.5 464.0 565.0 463.0 577.5 464.5 586.5 467.5 592.5 470.0 794.0 481.5 806.0 597.0 803.0 599.0 786.5 602.5 741.5 604.5 728.5 609.5 707.0 609.0 693.0 606.0 682.5 603.5 677.5 603.0 671.5 605.5 664.5 609.5 659.5 617.5 654.5 624.0 653.0 634.5 652.0 651.5 652.5 652.0 689.0 711.5 690.0 712.0 661.0 745.0 677.0 746.0 675.5 1376.5 669.0 1376.5 597.5 1323.5 598.5 1276.5 600.5 1194.0 606.0 1141.0 611.0 1117.5 610.5 1089.5 606.5 1036.5 594.0 983.5 584.0 926.0 569.5 845.0 554.0 833.5 552.5 815.0 552.5 806.0 553.5 772.0 561.5 764.0 604.5 758.0 648.0 757.0 649.0 712.0 647.5 711.5 514.0 781.0 513.5 782.5 509.0 784.0 511.5 782.0 508.0 728.0 508.0 727.5 462.5 652.0 461.0 652.0 542.5 645.5 550.0 643.0 555.0 640.5 564.0 637.0 571.0 633.0 576.5 613.5 598.0 610.5 599.5 607.5 599.5 603.5 596.0 602.0 593.0 597.0 577.0 588.0 559.5 586.0 548.5 586.5 525.0 590.0 496.0 593.5 486.0 599.0 480.0 603.0 477.0 604.5 474.0 606.5 465.0 607.0 450.5 605.5 433.5 602.0 416.0 598.5 402.5 592.0 384.0 588.5 371.0 584.0 346.0 583.5 336.0 476.0 340.0ZM750.0 666.5 750.5 666.0 751.0 667.0 750.5 667.5ZM750.5 665.5 751.0 665.0 751.5 666.0 751.0 666.5ZM751.0 664.5 751.5 664.0 752.0 665.0 751.5 665.5ZM752.0 662.0 752.5 661.5 753.0 662.5 752.5 663.0ZM752.5 661.0 753.0 660.5 753.5 661.5 753.0 662.0ZM753.0 660.0 753.5 659.5 754.0 660.5 753.5 661.0ZM561.5 618.0 562.5 618.5 565.0 626.0 562.0 635.5 561.0 635.0 557.5 627.0ZM561.5 502.0 562.5 502.5 565.0 510.0 562.0 519.5 561.0 519.0 557.5 511.0Z"/>
<path fill="#00c0ff" d="M712.0 508.0 712.0 513.5 781.0 513.5 782.5 509.0 784.0 511.5 782.0 508.0ZM464.5 354.5 470.0 794.0 481.5 806.0 584.0 803.0 584.5 792.5 588.5 758.0 590.0 734.0 590.0 703.5 588.5 688.0 586.5 678.0 586.5 668.5 588.0 662.5 593.0 654.5 603.0 646.0 606.5 644.0 613.0 642.0 651.5 642.0 652.0 689.0 706.0 690.0 709.0 670.0 709.5 661.5 710.5 660.5 745.0 677.0 746.0 675.5 1376.5 669.0 1376.5 635.5 1311.0 635.0 1263.0 637.0 1200.0 642.5 1166.5 647.0 1144.0 651.0 1126.0 651.0 1114.0 649.0 1098.0 644.0 1082.0 637.0 1058.0 625.0 1041.5 618.0 1025.5 613.0 1001.5 607.5 921.0 595.0 889.5 591.0 876.0 590.0 807.5 590.0 783.5 588.0 767.5 585.0 758.0 648.0 757.0 649.0 711.5 647.5 711.5 568.5 709.5 507.0 709.0 462.0 652.0 461.0 652.0 583.0 645.5 589.0 632.0 598.0 625.5 604.5 619.5 612.5 615.5 616.0 611.5 617.5 607.5 617.5 604.0 616.5 600.5 614.5 593.0 606.5 590.0 600.5 587.0 591.5 579.5 579.0 578.0 573.5 578.0 558.5 581.5 537.0 586.5 487.0 590.0 474.0 596.0 459.0 597.0 453.0 597.0 441.0 594.5 430.0 585.5 411.5 581.0 398.0 574.0 355.5 571.0 342.0 571.0 336.5 476.0 340.0ZM750.0 666.5 750.5 666.0 751.0 667.0 750.5 667.5ZM750.5 665.5 751.0 665.0 751.5 666.0 751.0 666.5ZM751.0 664.5 751.5 664.0 752.0 665.0 751.5 665.5ZM752.0 662.0 752.5 661.5 753.0 662.5 752.5 663.0ZM752.5 661.0 753.0 660.5 753.5 661.5 753.0 662.0ZM753.0 660.0 753.5 659.5 754.0 660.5 753.5 661.0ZM561.5 618.0 562.5 618.5 565.0 626.0 562.0 635.5 561.0 635.0 557.5 627.0ZM561.5 502.0 562.5 502.5 565.0 510.0 562.0 519.5 561.0 519.0 557.5 511.0Z"/>
<path fill="#00e8e0" d="M652.0 461.0 652.0 609.0 648.0 609.5 642.0 612.0 635.0 617.0 630.5 621.5 629.5 624.0 629.5 626.0 631.5 628.5 637.0 630.5 644.5 630.5 651.0 628.5 652.0 629.0 652.0 689.0 696.5 690.0 698.0 660.0 699.0 655.0 745.0 677.0 746.0 675.5 1056.0 672.0 1053.0 665.5 1047.0 656.5 1035.5 645.0 1025.0 638.0 1017.0 634.0 1000.0 628.0 980.0 623.5 957.0 620.0 823.0 608.0 782.0 606.5 764.0 605.0 758.0 648.0 757.0 649.0 699.0 647.0 699.0 608.5 696.5 536.5 696.5 462.0ZM750.0 666.5 750.5 666.0 751.0 667.0 750.5 667.5ZM750.5 665.5 751.0 665.0 751.5 666.0 751.0 666.5ZM751.0 664.5 751.5 664.0 752.0 665.0 751.5 665.5ZM752.0 662.0 752.5 661.5 753.0 662.5 752.5 663.0ZM752.5 661.0 753.0 660.5 753.5 661.5 753.0 662.0ZM753.0 660.0 753.5 659.5 754.0 660.5 753.5 661.0ZM557.5 337.0 476.0 340.0 464.5 354.5 470.0 794.0 481.5 806.0 571.5 803.5 570.0 789.5 570.5 773.5 580.0 724.0 581.0 716.0 581.0 696.0 579.5 685.0 576.5 677.5 574.0 674.5 572.0 674.5 568.5 677.0 566.0 674.5 566.0 671.0 568.5 668.0 572.0 669.0 574.5 667.0 581.5 650.5 596.5 637.0 598.0 634.5 598.5 629.5 596.0 624.0 589.5 617.5 585.5 612.0 581.5 602.5 579.0 599.0 576.5 597.5 574.5 597.5 569.5 602.5 568.0 603.0 565.5 601.0 564.5 598.0 565.5 594.5 570.0 588.0 571.0 578.5 571.0 550.0 577.5 531.5 580.5 518.5 582.5 496.5 583.0 470.5 581.5 457.5 574.5 444.0 572.0 435.0 567.5 393.0 559.0 351.5ZM561.5 618.0 562.5 618.5 565.0 626.0 562.0 635.5 561.0 635.0 557.5 627.0ZM561.5 502.0 562.5 502.5 565.0 510.0 562.0 519.5 561.0 519.0 557.5 511.0Z"/>
<path fill="#10b080" d="M652.0 461.0 652.0 689.0 689.0 689.5 687.5 654.5 688.0 649.5 745.0 677.0 746.0 675.5 999.5 673.0 998.5 666.0 994.0 658.5 990.0 654.5 981.0 648.5 971.0 644.0 958.5 640.0 947.5 637.5 929.5 635.0 915.0 634.0 889.0 634.0 876.5 635.0 860.0 638.0 846.0 643.5 836.0 646.5 824.5 647.0 817.0 645.5 808.0 642.0 795.0 634.5 782.5 628.5 773.5 625.5 761.5 623.0 758.0 648.0 757.0 649.0 688.0 646.5 687.0 643.0 684.0 581.0 684.0 461.5ZM750.0 666.5 750.5 666.0 751.0 667.0 750.5 667.5ZM750.5 665.5 751.0 665.0 751.5 666.0 751.0 666.5ZM751.0 664.5 751.5 664.0 752.0 665.0 751.5 665.5ZM752.0 662.0 752.5 661.5 753.0 662.5 752.5 663.0ZM752.5 661.0 753.0 660.5 753.5 661.5 753.0 662.0ZM753.0 660.0 753.5 659.5 754.0 660.5 753.5 661.0ZM541.5 337.5 476.0 340.0 464.5 354.5 470.0 794.0 481.5 806.0 557.5 804.0 557.5 777.5 560.5 754.0 564.5 739.0 571.5 720.0 573.0 712.5 573.0 700.5 572.0 696.0 569.5 691.0 565.5 687.0 561.5 681.0 560.0 676.5 560.0 671.5 561.0 667.5 563.0 664.0 572.0 656.0 575.5 650.0 580.5 636.0 581.5 631.0 581.5 625.5 580.5 620.5 577.0 612.0 573.0 609.0 568.0 608.5 566.0 607.5 563.0 604.5 561.0 599.0 561.0 594.5 565.5 574.5 565.5 564.5 564.0 556.0 564.5 538.5 565.5 533.5 567.5 529.0 572.5 525.5 576.5 518.0 579.0 503.0 579.0 486.5 577.0 476.5 568.0 458.5 566.5 454.0 563.0 438.5 558.5 411.5 547.0 379.5 543.0 358.5ZM561.5 618.0 562.5 618.5 565.0 626.0 562.0 635.5 561.0 635.0 557.5 627.0ZM561.5 502.0 562.5 502.5 565.0 510.0 562.0 519.5 561.0 519.0 557.5 511.0Z"/>
<path fill="#008040" d="M947.5 673.0 942.0 666.5 933.0 661.5 919.5 658.0 902.0 657.0 890.0 658.0 875.5 661.0 864.5 664.5 848.0 672.0 841.5 674.0 836.5 674.5 911.0 674.0ZM828.0 674.5 824.5 674.5 816.0 672.5 800.5 665.5 790.5 659.0 771.5 644.5 759.5 637.5 758.0 648.0 757.0 649.0 681.0 646.5 745.0 677.0 746.0 675.5ZM750.0 666.5 750.5 666.0 751.0 667.0 750.5 667.5ZM750.5 665.5 751.0 665.0 751.5 666.0 751.0 666.5ZM751.0 664.5 751.5 664.0 752.0 665.0 751.5 665.5ZM752.0 662.0 752.5 661.5 753.0 662.5 752.5 663.0ZM752.5 661.0 753.0 660.5 753.5 661.5 753.0 662.0ZM753.0 660.0 753.5 659.5 754.0 660.5 753.5 661.0ZM652.0 461.0 652.0 689.0 681.0 689.5 679.5 669.0 673.5 616.5 670.0 572.0 669.5 461.5ZM529.5 338.0 476.0 340.0 464.5 354.5 470.0 794.0 481.5 806.0 548.5 804.0 548.5 779.0 551.0 757.0 555.5 734.5 558.5 725.0 562.0 718.0 564.0 709.0 563.5 703.0 559.0 689.0 556.5 678.0 557.0 669.5 560.0 662.0 571.5 650.5 574.5 644.5 577.0 634.0 576.5 622.0 574.5 617.0 572.5 614.5 566.0 611.0 562.0 607.5 560.0 604.0 558.5 597.5 558.5 577.5 561.0 535.0 564.0 521.5 567.5 515.5 571.5 512.5 573.5 508.0 574.5 502.5 574.0 489.0 571.5 482.5 567.5 477.5 565.0 472.5 555.0 437.5 551.5 431.0 546.0 425.0 542.5 418.0 538.0 405.0 533.5 387.5 530.5 371.0 529.0 351.0ZM561.5 618.0 562.5 618.5 565.0 626.0 562.0 635.5 561.0 635.0 557.5 627.0ZM561.5 502.0 562.5 502.5 565.0 510.0 562.0 519.5 561.0 519.0 557.5 511.0Z"/>
<path fill="#207018" d="M681.0 646.5 745.0 677.0 746.0 675.5 786.0 675.0 760.5 653.0 757.5 652.5 757.0 651.5 758.5 649.0ZM750.0 666.5 750.5 666.0 751.0 667.0 750.5 667.5ZM750.5 665.5 751.0 665.0 751.5 666.0 751.0 666.5ZM751.0 664.5 751.5 664.0 752.0 665.0 751.5 665.5ZM752.0 662.0 752.5 661.5 753.0 662.5 752.5 663.0ZM752.5 661.0 753.0 660.5 753.5 661.5 753.0 662.0ZM753.0 660.0 753.5 659.5 754.0 660.5 753.5 661.0ZM652.0 461.0 652.0 689.0 673.5 689.5 663.5 617.5 654.5 570.0 654.0 549.5 655.5 525.0 655.5 461.0ZM509.5 338.5 476.0 340.0 464.5 354.5 470.0 794.0 481.5 806.0 538.0 804.5 537.0 798.0 537.0 789.5 539.0 773.0 554.0 709.5 554.0 669.0 555.5 664.0 558.0 659.5 565.0 653.5 570.5 647.5 573.0 642.5 574.5 636.5 574.5 625.0 572.5 619.0 570.0 616.0 563.5 612.0 560.5 609.0 558.0 604.0 556.0 595.0 554.0 576.0 554.5 563.0 556.5 552.5 559.5 524.5 561.0 519.0 557.5 510.5 561.5 502.0 562.5 502.5 563.5 506.5 564.0 505.0 564.0 488.5 556.0 462.5 553.0 457.0 550.0 454.0 546.0 452.0 542.5 448.5 539.5 444.0 518.0 392.5 512.0 373.0 509.5 361.0ZM561.5 618.0 562.5 618.5 565.0 626.0 562.0 635.5 561.0 635.0 557.5 627.0Z"/>
<path fill="#80a800" d="M681.0 646.5 742.0 675.5 767.0 675.5 759.5 668.0 749.5 667.5 758.5 649.0ZM652.0 610.0 652.0 689.0 666.0 689.5 658.5 638.5 655.5 623.0ZM464.5 371.0 470.0 794.0 481.5 806.0 523.0 805.0 523.5 786.5 527.0 769.0 532.0 754.5 542.0 730.5 547.5 713.0 549.5 701.0 550.0 676.0 551.5 667.0 553.0 662.5 557.0 656.0 565.5 650.0 569.5 645.5 572.0 640.0 573.0 634.5 573.0 628.0 571.0 620.5 568.0 617.0 560.5 612.0 556.0 604.0 551.0 578.0 551.0 560.5 558.5 514.5 557.5 510.5 559.5 504.5 559.0 490.5 556.5 481.0 553.0 474.0 550.0 471.0 542.5 466.5 538.5 462.5 521.0 435.0 507.0 416.5 489.5 400.0 465.5 371.0ZM561.5 618.0 562.5 618.5 565.0 626.0 562.0 635.5 561.0 635.0 557.5 627.0Z"/>
<path fill="#d8e000" d="M681.0 646.5 734.5 672.0 747.5 672.0 758.5 649.0ZM652.0 641.0 652.0 689.0 659.5 689.0ZM465.0 400.0 470.0 794.0 481.5 806.0 509.0 805.5 512.0 805.0 512.0 783.0 513.5 774.0 517.5 760.0 526.5 740.5 539.5 716.5 542.5 708.5 546.0 692.0 547.5 672.0 550.5 661.0 553.5 655.5 557.0 652.0 564.5 648.0 567.0 646.0 569.5 642.5 571.0 638.0 571.5 628.5 570.5 623.5 569.0 620.5 566.5 618.0 560.5 614.5 558.0 612.0 555.0 606.5 551.5 594.5 548.5 579.0 547.5 570.5 547.5 560.0 554.5 513.5 554.5 497.5 552.0 488.5 550.0 485.5 547.0 483.0 538.5 478.0 533.0 473.5 518.5 457.5 501.5 440.5 490.0 430.5 476.0 414.0 467.0 401.5ZM561.5 618.0 562.5 618.5 565.0 626.0 562.0 635.5 561.0 635.0 557.5 627.0Z"/>
<path fill="#ffe800" d="M652.0 676.0 652.0 689.0 653.5 689.0ZM681.0 646.5 726.0 668.0 749.5 668.0 758.5 649.0ZM465.5 422.0 470.0 794.0 481.5 806.0 494.5 805.5 494.0 797.0 496.0 783.0 501.0 766.0 506.0 754.0 513.5 740.0 531.0 715.0 538.5 699.5 542.0 687.0 544.0 672.5 548.0 659.5 550.5 654.5 554.5 650.0 564.5 645.5 568.0 642.0 570.0 636.0 570.0 627.5 569.0 623.5 567.5 621.0 560.0 616.5 556.0 612.5 553.5 608.0 551.0 600.5 544.5 573.0 543.5 564.5 544.0 544.0 547.5 514.0 547.0 506.5 544.5 499.5 540.0 494.5 534.0 491.5 524.0 484.0 498.5 459.0 493.0 454.5 478.5 439.5ZM561.5 618.0 562.5 618.5 565.0 626.0 562.0 635.5 561.0 635.0 557.5 627.0Z"/>
<path fill="#ffc000" d="M681.0 646.5 719.0 664.5 751.0 664.5 758.5 649.0ZM465.5 441.5 470.0 788.0 479.0 770.0 496.0 743.0 506.5 728.5 522.0 711.0 529.0 701.0 535.0 688.5 542.0 665.5 547.5 653.5 550.0 650.0 553.5 647.0 556.5 645.5 562.0 644.5 566.5 641.5 568.5 637.0 569.0 629.5 567.5 624.0 565.0 621.0 562.5 619.5 565.0 626.0 562.5 635.0 561.0 635.0 557.5 627.0 561.0 619.0 558.0 617.5 554.5 614.0 552.0 609.5 546.5 590.5 543.0 581.5 539.0 567.0 537.0 548.0 534.0 531.0 531.0 520.0 528.5 514.5 517.5 499.0 504.0 482.0 495.5 473.0 476.5 455.5Z"/>
<path fill="#ffa000" d="M681.0 646.5 710.5 660.5 753.0 660.5 758.5 649.0ZM465.5 460.0 469.5 749.0 520.5 696.5 527.0 687.0 535.0 669.0 545.0 651.0 550.5 645.0 555.0 643.0 561.5 642.5 563.5 641.5 566.5 638.0 567.5 634.5 567.5 629.5 566.0 625.0 563.5 622.5 565.0 627.5 562.5 635.0 561.0 635.0 557.5 627.0 560.0 620.5 555.0 618.0 550.5 611.5 544.5 593.0 533.5 571.0 530.0 557.5 524.5 542.0 509.0 511.0 499.5 494.0 494.5 487.0 489.0 481.5 477.0 472.0Z"/>
<path fill="#ff8000" d="M681.0 646.5 703.0 657.0 754.5 657.0 758.5 649.0ZM466.0 478.5 469.0 727.0 479.5 719.0 498.5 701.0 516.5 685.5 522.0 678.5 534.5 658.0 542.0 648.0 546.0 644.0 551.5 640.5 555.0 639.5 560.5 640.0 564.5 637.5 565.5 635.0 565.5 629.0 565.0 627.5 562.5 635.0 561.0 635.0 557.5 627.0 559.0 623.0 555.0 621.5 551.0 617.5 549.0 614.0 545.5 603.0 542.0 595.5 534.0 587.5 531.5 584.0 528.5 578.0 522.0 560.5 514.0 546.0 503.5 531.0 499.5 523.0 495.0 509.5 490.5 501.0 486.5 495.5 480.0 489.0Z"/>
<path fill="#ff4000" d="M681.0 646.5 695.0 653.0 756.5 653.0 758.5 649.0ZM466.5 500.5 469.0 708.0 489.5 689.0 510.5 676.5 516.0 671.0 529.5 654.0 543.0 640.5 553.0 634.0 557.0 634.0 559.5 635.5 561.5 635.5 558.5 628.5 554.5 627.0 549.0 620.5 541.0 602.0 538.0 599.5 534.5 599.0 531.5 597.5 527.0 593.0 523.0 585.5 519.5 576.0 511.5 562.0 503.0 553.5 497.5 549.5 491.5 543.0 485.5 532.5 480.5 516.0 478.0 511.0 471.5 503.5Z"/>
<path fill="#ff0000" d="M681.0 646.5 687.5 649.5 758.5 649.0ZM467.0 542.5 468.5 682.0 472.5 677.0 479.5 671.0 487.5 667.0 494.0 665.0 502.0 664.0 506.5 662.0 517.0 653.0 532.5 642.5 536.0 639.5 543.0 631.0 544.5 628.0 544.5 623.0 542.5 617.0 539.0 611.0 534.0 611.0 528.0 609.5 522.5 605.0 520.0 601.0 512.5 584.0 507.0 576.5 502.5 573.0 490.0 568.0 480.5 561.5 473.0 553.0Z"/>
<path fill="#d80000" d="M515.5 624.5 515.0 626.0 517.0 630.0 521.0 634.5 526.0 634.0 528.5 632.0 529.5 630.0 529.0 625.5 525.5 623.5 520.0 623.0ZM467.5 581.5 468.0 653.0 476.5 648.5 494.0 641.5 508.0 627.5 513.5 624.0 509.0 607.5 506.5 602.0 503.0 597.5 500.5 596.0 489.0 592.5 479.5 588.5Z"/>
<path fill="#a00000" d="M467.5 613.0 468.0 624.0 469.0 622.0 469.0 616.5Z"/><defs><clipPath id="cp"><path d="M464.4 355.0 476.0 340.0 605.0 335.0 650.5 390.0 655.0 745.0 611.0 803.0 481.5 806.5 470.0 794.0Z"/></clipPath><clipPath id="cb"><rect x="440" y="300" width="937" height="600"/></clipPath></defs><g clip-path="url(#cb)"><g clip-path="url(#cp)" fill="none" stroke="#000" stroke-width="0.9" stroke-opacity="0.85"><path d="M490.9 340.8 491.9 352.3 492.7 363.4 493.1 374.5 493.1 385.9 492.7 397.6 492.0 409.9 491.1 422.5 490.1 435.3 489.1 447.8 488.3 460.0 487.7 471.5 487.5 482.6 487.6 493.2 488.2 503.7 489.0 514.3 490.0 525.5 491.1 537.4 492.3 549.9 493.5 562.8 494.5 576.0 495.3 589.0 495.7 601.6 495.8 613.7 495.4 625.4 494.7 636.8 493.6 648.2 492.5 660.0 491.4 672.4 490.5 685.3 489.9 698.7 489.6 712.3 489.8 725.9 490.3 739.1 491.1 751.8 492.2 763.7 493.5 775.2 494.7 786.3 495.9 797.4 496.9 808.8M512.2 339.0 512.7 349.6 512.9 360.3 512.8 371.4 512.2 382.9 511.4 395.0 510.4 407.5 509.4 420.2 508.5 432.7 507.7 444.9 507.4 456.7 507.6 468.0 508.3 479.1 509.6 490.0 511.0 500.9 512.1 512.2 513.0 524.3 513.6 537.3 514.3 550.9 514.9 564.8 515.5 578.5 516.0 591.6 516.3 604.1 516.4 615.8 515.9 626.9 514.6 638.0 513.0 649.6 511.4 662.0 510.3 675.0 509.6 688.4 509.4 701.8 509.7 715.0 510.4 727.7 511.4 739.8 512.5 751.2 513.8 762.1 515.1 772.8 516.1 783.5 517.0 794.5 517.4 806.1M538.2 334.2 538.2 344.9 537.8 356.1 537.1 367.8 536.2 380.2 535.2 393.0 534.2 406.0 533.3 418.8 532.7 431.4 532.5 443.6 532.8 455.8 533.9 468.0 535.8 480.3 538.7 492.4 541.8 503.1 543.1 513.2 542.5 525.0 541.7 538.9 541.2 553.7 541.0 568.2 541.1 582.1 541.4 595.5 542.2 608.1 543.3 619.1 543.7 627.9 541.7 636.5 538.7 647.7 536.5 660.9 535.3 674.7 534.9 688.3 535.3 701.3 536.0 713.7 537.1 725.4 538.4 736.4 539.6 747.1 540.8 757.6 541.8 768.3 542.4 779.4 542.7 791.2 542.6 803.5M562.8 330.5 562.2 342.1 561.4 354.4 560.4 367.3 559.4 380.7 558.4 394.1 557.6 407.4 557.2 420.3 557.0 432.7 557.3 444.9 558.0 457.4 559.0 470.5 560.3 484.5 561.9 499.2 564.3 513.5 565.6 509.4 565.0 524.1 565.2 539.7 565.2 554.9 564.9 569.2 564.3 582.7 563.5 596.0 562.6 609.3 561.6 622.2 561.8 634.3 559.8 628.4 559.3 642.4 559.2 657.3 559.5 671.9 560.2 685.6 561.2 698.3 562.4 710.2 563.6 721.3 564.9 732.2 565.9 743.0 566.8 754.1 567.2 765.7 567.3 778.0 567.0 790.9 566.4 804.2M581.7 330.7 580.8 343.5 579.8 356.9 578.7 370.5 577.9 384.2 577.2 397.5 576.9 410.4 576.9 422.6 577.4 434.4 578.1 446.1 578.9 458.0 579.5 470.6 579.6 483.8 578.9 496.9 577.7 508.2 578.2 517.7 580.5 528.6 582.5 541.3 583.3 554.2 583.1 566.6 582.1 578.6 580.3 590.4 577.9 602.1 574.9 613.1 572.8 622.3 573.4 631.6 575.7 643.5 577.9 657.1 579.7 670.8 581.2 684.0 582.7 696.3 584.0 708.0 585.2 719.3 586.1 730.6 586.8 742.3 587.1 754.5 586.9 767.3 586.5 780.7 585.7 794.3 584.7 808.0M605.9 333.7 604.8 347.1 603.8 360.7 603.0 374.1 602.5 387.1 602.4 399.5 602.7 411.2 603.3 422.4 604.2 433.4 605.3 444.4 606.4 455.8 607.3 467.8 607.9 480.2 608.0 492.8 608.0 505.1 608.0 516.9 608.3 528.5 608.4 540.0 608.1 551.3 607.4 562.3 606.3 573.4 605.0 584.7 603.7 596.4 602.6 608.5 602.2 620.7 602.6 633.4 603.9 646.4 605.5 659.7 607.2 672.7 608.7 685.2 610.0 697.1 611.2 708.8 612.0 720.4 612.4 732.3 612.5 744.8 612.2 757.7 611.6 771.1 610.7 784.7 609.7 798.1 608.6 811.1M628.8 335.8 627.9 349.0 627.2 361.9 626.9 374.3 626.9 386.1 627.4 397.3 628.1 408.1 629.2 418.6 630.4 429.3 631.7 440.5 632.8 452.1 633.7 464.4 634.3 477.0 634.5 489.8 634.3 502.4 633.9 514.6 633.2 526.3 632.4 537.6 631.5 548.8 630.5 560.0 629.6 571.6 629.0 583.7 628.6 596.5 628.6 609.8 629.0 623.4 629.9 636.9 631.1 650.3 632.4 663.2 633.8 675.5 635.0 687.3 636.0 698.8 636.6 710.4 636.9 722.1 636.7 734.4 636.3 747.1 635.5 760.1 634.5 773.2 633.5 786.1 632.4 798.6 631.6 810.4M466.9 368.2 476.3 368.6 485.1 368.6 492.9 368.2 499.7 367.5 506.2 366.4 512.9 365.1 520.4 363.7 528.7 362.3 537.6 361.1 546.2 360.3 554.1 359.9 561.0 360.0 567.1 360.6 573.0 361.6 579.3 362.8 586.6 364.2 594.7 365.5 603.5 366.6 612.1 367.3 620.0 367.6 627.0 367.4 633.4 366.8 639.8 365.8 646.8 364.5M468.1 396.4 477.2 396.7 485.5 396.6 492.8 396.1 499.2 395.4 505.2 394.5 511.5 393.5 518.7 392.6 526.7 391.8 535.3 391.4 543.8 391.3 551.6 391.7 558.5 392.4 564.7 393.5 570.7 394.7 577.3 395.9 584.8 396.9 593.3 397.7 602.4 398.0 611.4 397.8 619.8 397.1 627.3 396.0 634.2 394.5 641.0 392.9 648.4 391.3M467.2 426.8 475.9 427.1 483.8 427.0 490.8 426.5 497.0 425.8 502.8 425.0 509.1 424.1 516.2 423.4 524.3 422.9 533.1 422.8 541.8 423.0 549.9 423.5 557.1 424.2 563.6 425.0 570.0 425.8 577.0 426.3 585.0 426.6 594.0 426.5 603.5 425.9 613.0 424.9 621.7 423.5 629.6 422.0 636.7 420.3 643.8 418.8 651.4 417.6M464.9 458.7 473.4 458.5 481.4 457.9 488.5 457.0 494.8 455.9 500.9 454.7 507.4 453.8 515.0 453.1 523.5 452.7 532.7 452.7 541.8 453.1 550.2 453.6 557.8 454.2 564.6 454.7 571.3 455.0 578.7 455.0 587.0 454.6 596.3 453.9 606.1 452.9 615.8 451.7 624.7 450.4 632.5 449.2 639.7 448.1 646.6 447.3 654.0 447.0M462.8 488.6 471.6 487.5 480.0 486.1 487.5 484.6 494.4 483.1 501.1 481.9 508.5 481.2 517.0 481.0 526.4 481.5 536.3 482.6 545.8 484.3 553.9 486.0 560.5 487.3 566.3 487.7 572.4 487.3 579.6 486.3 588.1 485.2 597.8 483.9 607.9 482.6 617.8 481.4 626.6 480.3 634.4 479.4 641.2 478.9 647.8 478.7 654.7 478.9M462.5 515.1 471.8 513.5 480.6 511.8 488.6 510.3 496.1 509.1 503.6 508.2 511.7 507.9 521.1 508.0 531.7 508.5 542.9 509.3 554.0 510.3 563.9 510.9 570.5 507.6 561.6 512.7 569.2 513.9 577.7 514.2 587.2 514.0 597.5 513.3 608.0 512.5 617.9 511.6 626.6 510.7 634.1 510.0 640.6 509.7 646.8 509.6 653.4 509.9M464.2 541.4 473.9 540.0 483.0 538.9 491.2 538.1 498.7 537.8 505.9 537.8 513.7 538.1 522.3 538.7 531.8 539.3 541.6 539.8 550.9 540.2 558.8 540.3 565.2 540.6 570.6 541.1 576.1 541.7 582.6 542.1 590.3 542.0 599.1 541.5 608.4 540.7 617.4 539.8 625.4 538.9 632.4 538.3 638.5 538.0 644.4 538.1 650.9 538.4M467.3 570.5 476.9 569.8 486.0 569.4 494.0 569.4 501.2 569.8 508.0 570.6 515.2 571.7 523.2 572.9 531.9 574.2 541.0 575.2 549.9 576.0 557.8 576.2 564.7 576.0 570.6 575.3 576.4 574.1 582.7 572.6 589.9 571.0 598.1 569.3 606.9 567.9 615.4 566.7 623.2 566.0 630.1 565.7 636.2 565.9 642.3 566.5 649.0 567.3M469.8 601.3 479.2 600.8 488.0 600.6 495.7 600.8 502.6 601.4 509.3 602.3 516.3 603.4 524.3 604.7 533.1 606.0 542.1 607.3 550.5 608.4 557.4 608.9 562.6 608.4 567.1 606.7 572.0 604.2 578.1 601.4 585.6 598.9 594.4 597.0 603.7 595.7 612.9 595.1 621.2 595.1 628.6 595.7 635.3 596.7 641.8 597.9 649.0 599.3M470.5 630.2 479.5 629.7 487.8 629.5 495.2 629.6 501.8 630.0 508.3 630.5 515.5 631.0 523.7 631.4 533.2 631.4 543.2 630.9 553.0 629.8 561.3 627.4 560.7 620.5 558.2 625.3 564.8 625.9 572.7 625.6 581.8 625.2 591.8 625.1 602.2 625.4 612.3 626.1 621.3 627.2 629.3 628.5 636.5 629.9 643.5 631.2 651.0 632.3M469.1 657.2 477.7 657.0 485.7 657.3 492.7 657.8 499.0 658.5 505.1 659.1 511.7 659.6 519.3 659.7 527.8 659.3 536.8 658.3 545.4 657.0 552.9 655.6 559.2 654.5 564.8 653.9 570.6 654.0 577.5 654.5 585.7 655.2 595.2 656.1 605.2 657.2 615.1 658.4 624.1 659.6 632.2 660.8 639.4 661.8 646.5 662.4 654.1 662.7M466.6 685.7 475.2 686.4 483.2 687.4 490.3 688.6 496.7 689.9 502.9 690.9 509.5 691.7 517.1 692.1 525.7 692.1 535.0 691.6 544.2 690.8 552.8 689.9 560.4 688.9 567.4 688.0 574.2 687.4 581.6 687.2 590.0 687.2 599.3 687.6 609.1 688.2 618.7 688.9 627.5 689.6 635.3 690.2 642.3 690.5 649.1 690.5 656.3 690.1M464.9 717.6 473.8 718.9 482.2 720.3 489.7 721.7 496.5 722.8 503.1 723.5 510.1 723.8 518.1 723.6 527.1 722.9 536.8 721.8 546.3 720.5 555.3 719.2 563.2 717.9 570.4 716.8 577.4 716.1 584.8 715.8 593.1 715.8 602.2 716.2 611.8 716.7 621.0 717.4 629.4 718.0 636.8 718.4 643.4 718.6 649.7 718.4 656.5 717.9M465.1 750.4 474.5 751.6 483.3 752.6 491.2 753.3 498.4 753.5 505.4 753.3 512.7 752.6 520.9 751.5 530.1 750.0 539.8 748.4 549.4 746.8 558.2 745.4 566.1 744.3 573.1 743.7 579.8 743.5 586.8 743.8 594.7 744.4 603.4 745.3 612.5 746.4 621.3 747.4 629.3 748.2 636.2 748.7 642.3 748.8 648.3 748.7 654.7 748.2M467.4 780.7 477.0 781.3 486.1 781.6 494.2 781.5 501.5 780.9 508.4 780.0 515.7 778.8 523.8 777.3 532.7 775.8 542.2 774.5 551.4 773.4 559.9 772.7 567.3 772.5 573.9 772.9 580.1 773.6 586.7 774.8 594.1 776.1 602.4 777.5 611.1 778.8 619.5 779.7 627.2 780.4 633.9 780.5 639.9 780.3 645.8 779.6 652.2 778.7"/><path d="M572.6 511.0 569.8 520.2 563.0 524.0 556.2 520.2 553.4 511.0 556.2 501.8 563.0 498.0 569.8 501.8 572.6 511.0ZM558.0 511.0 L551.0 512.0 M565.0 511.0 L573.0 511.0M571.1 516.1 L579.4 520.0M560.1 524.0 L559.3 533.9M550.3 513.9 L541.5 516.2M555.3 499.9 L550.7 491.3M568.2 501.2 L574.1 493.6M572.6 627.0 569.8 636.2 563.0 640.0 556.2 636.2 553.4 627.0 556.2 617.8 563.0 614.0 569.8 617.8 572.6 627.0ZM558.0 627.0 L551.0 628.0 M565.0 627.0 L573.0 627.0M571.1 632.1 L579.4 636.0M560.1 640.0 L559.3 649.9M550.3 629.9 L541.5 632.2M555.3 615.9 L550.7 607.3M568.2 617.2 L574.1 609.6"/></g><path d="M558.0 511.0 L562.0 502.0 L565.0 511.0 L562.0 520.0ZM558.0 627.0 L562.0 618.0 L565.0 627.0 L562.0 636.0Z" fill="#fff" stroke="#000" stroke-width=".8"/><path d="M464.4 355.0 476.0 340.0 605.0 335.0 650.5 390.0 655.0 745.0 611.0 803.0 481.5 806.5 470.0 794.0Z" fill="none" stroke="#000" stroke-width="1"/><path d="M459 512 L466 503 L468 645 L456.5 630Z M456.5 560 L467 556 M456.5 600 L467 604" fill="none" stroke="#000" stroke-width=".9"/><g fill="none" stroke="#000" stroke-width="0.9" stroke-opacity="0.85"><path d="M665.0 461.3 L666.0 689.7M687.6 461.7 L688.6 690.2M711.0 462.2 L712.0 690.6M652 490.7 L711 491.2M652 520.8 L711 521.3M652 550.0 L711 550.5M652 579.5 L711 580.0M652 609.0 L711 609.5M652 638.5 L711 639.0M652 668.0 L711 668.5M733.0 462.6 L733.0 508M733.0 676 L733.0 691.0M756.0 463.0 L756.0 508M756.0 676 L756.0 691.4M779.0 463.5 L779.0 508M779.0 676 L779.0 691.9M802.0 464.0 L802.0 508M802.0 676 L802.0 692.3M825.0 464.4 L825.0 508M825.0 676 L825.0 692.7M848.0 464.9 L848.0 508M848.0 676 L848.0 693.2M652 490.7 L870 491.5M711 508 L782 507.4M711 676 L866 677M711 641 L760 641M713 507 C717 512 716 550 716 641M752 507 C756 512 756 560 756 641M711 524.5 L778 524.5 M711 583 L770 583"/><path d="M870.5 467.4 L1377 469.6M870.5 476 L1377 477 M870.5 484.4 L1377 485 M870.5 504.5 L1377 493M887.0 468 C890.0 474 893.0 478 893.5 484 L893.5 504.1M930.5 468 C933.5 474 936.5 478 937.0 484 L937.0 503.1M974.0 468 C977.0 474 980.0 478 980.5 484 L980.5 502.1M1017.5 468 C1020.5 474 1023.5 478 1024.0 484 L1024.0 501.2M1061.0 468 C1064.0 474 1067.0 478 1067.5 484 L1067.5 500.2M1104.5 468 C1107.5 474 1110.5 478 1111.0 484 L1111.0 499.2M1148.0 468 C1151.0 474 1154.0 478 1154.5 484 L1154.5 498.2M1191.5 468 C1194.5 474 1197.5 478 1198.0 484 L1198.0 497.2M1235.0 468 C1238.0 474 1241.0 478 1241.5 484 L1241.5 496.2M1278.5 468 C1281.5 474 1284.5 478 1285.0 484 L1285.0 495.2M1322.0 468 C1325.0 474 1328.0 478 1328.5 484 L1328.5 494.2M1365.5 468 C1368.5 474 1371.5 478 1372.0 484 L1372.0 493.3M865.0 504.5 L905.0 515.8M907.5 503.6 L947.5 515.0M950.0 502.7 L990.0 514.3M992.5 501.7 L1032.5 513.5M1035.0 500.8 L1075.0 512.7M1077.5 499.8 L1117.5 511.5M1120.0 498.8 L1160.0 509.6M1162.5 497.9 L1202.5 507.7M1205.0 496.9 L1245.0 505.9M1247.5 495.9 L1287.5 504.0M1290.0 495.0 L1330.0 502.1M1332.5 494.0 L1372.5 500.2M782 507.4 L870.5 504.5M790 522 L870.5 516.4 L1100 512.3 L1377 500"/><path d="M782.6 509.4 780.7 518.2 778.9 526.9 777.0 535.7 775.2 544.5 773.5 553.2 771.7 562.0 770.1 570.8 768.5 579.5 766.9 588.3 765.5 597.1 764.1 605.9 762.7 614.6 761.4 623.4 760.2 632.2 759.0 640.9 757.5 649.7 754.7 658.5 750.8 667.2 745.6 676.0M818.5 519.7 815.4 533.8 812.3 547.9 809.5 562.1 806.9 576.2 804.5 590.3 802.5 604.4 800.9 618.6 799.5 632.7 798.3 646.8 797.4 660.9 796.5 675.1M860.9 517.0 857.8 531.3 854.7 545.6 851.9 560.0 849.3 574.3 846.9 588.6 844.9 603.0 843.3 617.3 841.9 631.6 840.7 646.0 839.8 660.3 838.9 674.6M903.3 515.8 900.2 530.2 897.1 544.6 894.3 559.0 891.7 573.4 889.3 587.8 887.3 602.2 885.7 616.6 884.3 631.0 883.1 645.4 882.2 659.8 881.3 674.2M945.7 515.1 942.6 529.5 939.5 543.9 936.7 558.3 934.1 572.8 931.7 587.2 929.7 601.6 928.1 616.0 926.7 630.5 925.5 644.9 924.6 659.3 923.7 673.8M988.1 514.3 985.0 528.8 981.9 543.2 979.1 557.7 976.5 572.1 974.1 586.6 972.1 601.0 970.5 615.5 969.1 630.0 967.9 644.4 967.0 658.9 966.1 673.3M1030.5 513.5 1027.4 528.0 1024.3 542.5 1021.5 557.0 1018.9 571.5 1016.5 586.0 1014.5 600.5 1012.9 615.0 1011.5 629.4 1010.3 643.9 1009.4 658.4 1008.5 672.9M1072.9 512.8 1069.8 527.3 1066.7 541.8 1063.9 556.3 1061.3 570.9 1058.9 585.4 1056.9 599.9 1055.3 614.4 1053.9 628.9 1052.7 643.5 1051.8 658.0 1050.9 672.5M1115.3 511.6 1112.2 526.2 1109.1 540.8 1106.3 555.4 1103.7 570.0 1101.3 584.6 1099.3 599.1 1097.7 613.7 1096.3 628.3 1095.1 642.9 1094.2 657.5 1093.3 672.1M1157.7 509.7 1154.6 524.5 1151.5 539.2 1148.7 553.9 1146.1 568.6 1143.7 583.3 1141.7 598.1 1140.1 612.8 1138.7 627.5 1137.5 642.2 1136.6 656.9 1135.7 671.7M1200.1 507.9 1197.0 522.7 1193.9 537.6 1191.1 552.4 1188.5 567.3 1186.1 582.1 1184.1 597.0 1182.5 611.8 1181.1 626.7 1179.9 641.5 1179.0 656.4 1178.1 671.2M1242.5 506.0 1239.4 521.0 1236.3 535.9 1233.5 550.9 1230.9 565.9 1228.5 580.9 1226.5 595.9 1224.9 610.9 1223.5 625.9 1222.3 640.9 1221.4 655.8 1220.5 670.8M1284.9 504.1 1281.8 519.2 1278.7 534.3 1275.9 549.5 1273.3 564.6 1270.9 579.7 1268.9 594.8 1267.3 609.9 1265.9 625.1 1264.7 640.2 1263.8 655.3 1262.9 670.4M1327.3 502.2 1324.2 517.5 1321.1 532.7 1318.3 548.0 1315.7 563.2 1313.3 578.5 1311.3 593.7 1309.7 609.0 1308.3 624.2 1307.1 639.5 1306.2 654.7 1305.3 670.0M1369.7 500.3 1366.6 515.7 1363.5 531.1 1360.7 546.5 1358.1 561.9 1355.7 577.3 1353.7 592.6 1352.1 608.0 1350.7 623.4 1349.5 638.8 1348.6 654.2 1347.7 669.6M771.9 569.7 781.3 569.6 802.6 568.5 823.8 567.5 845.1 566.5 866.4 565.5 887.7 565.1 908.9 564.7 930.2 564.4 951.5 564.1 972.8 563.8 994.0 563.4 1015.3 563.1 1036.6 562.8 1057.9 562.5 1079.1 562.1 1100.4 561.8 1121.7 561.1 1143.0 560.4 1164.2 559.6 1185.5 558.9 1206.8 558.2 1228.1 557.5 1249.3 556.8 1270.6 556.1 1291.9 555.3 1313.2 554.6 1334.4 553.9 1355.7 553.2 1377.0 552.5M763.0 617.4 781.3 617.1 802.6 616.3 823.8 615.7 845.1 615.1 866.4 614.4 887.7 614.1 908.9 613.8 930.2 613.5 951.5 613.2 972.8 613.0 994.0 612.7 1015.3 612.4 1036.6 612.1 1057.9 611.9 1079.1 611.6 1100.4 611.3 1121.7 610.8 1143.0 610.3 1164.2 609.8 1185.5 609.4 1206.8 608.9 1228.1 608.4 1249.3 607.9 1270.6 607.4 1291.9 606.9 1313.2 606.4 1334.4 605.9 1355.7 605.5 1377.0 605.0M754.4 660.5 781.3 660.1 802.6 659.5 823.8 659.2 845.1 658.9 866.4 658.6 887.7 658.3 908.9 658.1 930.2 657.9 951.5 657.6 972.8 657.4 994.0 657.2 1015.3 656.9 1036.6 656.7 1057.9 656.5 1079.1 656.3 1100.4 656.0 1121.7 655.7 1143.0 655.5 1164.2 655.2 1185.5 654.9 1206.8 654.6 1228.1 654.3 1249.3 654.1 1270.6 653.8 1291.9 653.5 1313.2 653.2 1334.4 652.9 1355.7 652.7 1377.0 652.4M748.7 671.3 781.3 670.8 802.6 670.3 823.8 670.1 845.1 669.9 866.4 669.6 887.7 669.4 908.9 669.2 930.2 668.9 951.5 668.7 972.8 668.5 994.0 668.3 1015.3 668.1 1036.6 667.9 1057.9 667.6 1079.1 667.4 1100.4 667.2 1121.7 667.0 1143.0 666.7 1164.2 666.5 1185.5 666.3 1206.8 666.1 1228.1 665.8 1249.3 665.6 1270.6 665.4 1291.9 665.1 1313.2 664.9 1334.4 664.7 1355.7 664.5 1377.0 664.2M745.6 676 L800 675 L1377 669.3"/><path d="M652 461 L870.5 465.3 L870.5 467.4 L1377 469.6M652 689.5 L865.5 693.5 L865.5 676.9"/><path d="M680.5 646.4 L758 649 M680.5 646.4 L745.5 677.5 M680.5 646.4 L652 646 M700 641 L760 641 M712 632 L765 632"/></g></g><rect x="1288" y="664.55" width="25" height="14.75" fill="#400080"/><rect x="1288" y="650.10" width="25" height="14.75" fill="#3000b0"/><rect x="1288" y="635.65" width="25" height="14.75" fill="#2000d8"/><rect x="1288" y="621.20" width="25" height="14.75" fill="#0020ff"/><rect x="1288" y="606.75" width="25" height="14.75" fill="#0078ff"/><rect x="1288" y="592.30" width="25" height="14.75" fill="#00c0ff"/><rect x="1288" y="577.85" width="25" height="14.75" fill="#00e8e0"/><rect x="1288" y="563.40" width="25" height="14.75" fill="#10b080"/><rect x="1288" y="548.95" width="25" height="14.75" fill="#008040"/><rect x="1288" y="534.50" width="25" height="14.75" fill="#207018"/><rect x="1288" y="520.05" width="25" height="14.75" fill="#80a800"/><rect x="1288" y="505.60" width="25" height="14.75" fill="#d8e000"/><rect x="1288" y="491.15" width="25" height="14.75" fill="#ffe800"/><rect x="1288" y="476.70" width="25" height="14.75" fill="#ffc000"/><rect x="1288" y="462.25" width="25" height="14.75" fill="#ffa000"/><rect x="1288" y="447.80" width="25" height="14.75" fill="#ff8000"/><rect x="1288" y="433.35" width="25" height="14.75" fill="#ff4000"/><rect x="1288" y="418.90" width="25" height="14.75" fill="#ff0000"/><rect x="1288" y="404.45" width="25" height="14.75" fill="#d80000"/><rect x="1288" y="390.00" width="25" height="14.75" fill="#a00000"/><rect x="1288" y="390" width="25" height="289" fill="none" stroke="#222" stroke-width="1"/><path d="M1281 402.3 H1288M1281 433.0 H1288M1281 463.8 H1288M1281 494.5 H1288M1281 525.3 H1288M1281 556.0 H1288M1281 586.8 H1288M1281 617.5 H1288M1281 648.3 H1288M1281 679 H1288" stroke="#222" stroke-width="1"/><g font-family="Liberation Sans, sans-serif" font-size="12" fill="#333"><text x="1274" y="400.8" text-anchor="end">225</text><text x="1274" y="431.5" text-anchor="end">200</text><text x="1274" y="462.3" text-anchor="end">175</text><text x="1274" y="493.0" text-anchor="end">150</text><text x="1274" y="523.8" text-anchor="end">125</text><text x="1274" y="554.5" text-anchor="end">100</text><text x="1274" y="585.3" text-anchor="end">75</text><text x="1274" y="616.0" text-anchor="end">50</text><text x="1274" y="646.8" text-anchor="end">25</text><text x="1274" y="388" text-anchor="end">235.000</text><text x="1274" y="690" text-anchor="end">0.000</text></g><g font-family="Liberation Sans, sans-serif" font-size="15" fill="#222"><text x="1313" y="340" text-anchor="end">Equivalent stress</text><text x="1313" y="358" text-anchor="end">[MPa]</text></g><path d="M426 185 L436.5 1001" stroke="#555" stroke-width="1.1" stroke-dasharray="7 2.5 1.2 2.5" fill="none"/><path d="M431 574.5 L457 574" stroke="#555" stroke-width="1.1" stroke-dasharray="7 2.5 1.2 2.5" fill="none"/><path d="M653 565 L712 563" stroke="#333" stroke-width="1" stroke-dasharray="7 2.5 1.2 2.5" fill="none"/><g>
<ellipse cx="1316" cy="262" rx="42" ry="6" fill="none" stroke="#dcdcdc" stroke-width="4.5"/>
<path d="M1272 265 L1281 263 L1280 267Z M1354 267 L1345 264 L1346 268Z" fill="#666"/>
<path d="M1290 225 L1310 227 L1310 269 L1290 264Z" fill="#b3b3b3" stroke="#858585" stroke-width=".8"/>
<path d="M1310 227 L1343 225 L1343 264 L1310 269Z" fill="#b6b6b6" stroke="#858585" stroke-width=".8"/>
<path d="M1290 225 L1310 222 L1343 225 L1310 227Z" fill="#bdbdbd" stroke="#858585" stroke-width=".8"/>
<path d="M1320 222.5 V260 M1290 264 L1320 260 L1343 264" fill="none" stroke="#8a8a8a" stroke-width=".7"/>
<text x="1296" y="250" font-size="9" fill="#f4f4f4" font-family="Liberation Sans, sans-serif" transform="translate(1296,0) scale(0.65,1) translate(-1296,0)">+X</text>
<text x="1324" y="250" font-size="9" fill="#f4f4f4" font-family="Liberation Sans, sans-serif" transform="translate(1324,0) scale(0.65,1) translate(-1324,0)">+Y</text>
</g></svg><!-- FEM_END -->
<!-- left panel -->
<svg class="a" style="left:10px;top:196px" width="16" height="14" viewBox="0 0 16 14"><path d="M8 0.5L15.5 13.5H0.5Z" fill="#f5d000"/><path d="M8 4.5V9.5" stroke="#111" stroke-width="1.8"/><circle cx="8" cy="11.5" r="1" fill="#111"/></svg>
<div class="lp" style="left:36px;top:196px;font-weight:bold;font-size:12px;color:#111;letter-spacing:-0.12px">AM1 General cross section 4 - General is not integral</div>
<div class="lp" style="left:10px;top:212px;color:#333">The member is created by cold formed sections that cannot be welded</div>
<div class="lp" style="left:10px;top:232px;color:#333">MNA</div>
<svg class="a" style="left:94px;top:233px" width="16" height="14" viewBox="0 0 16 14"><path d="M1 7.5L5.5 12.5L15 1.5" fill="none" stroke="#5cb85c" stroke-width="3" stroke-linejoin="round"/></svg>
<div class="lp" style="left:119px;top:232px;color:#333">100.0 %</div>
<div class="lp" style="left:10px;top:248px;color:#333">MNA Plates</div>
<svg class="a" style="left:94px;top:249px" width="16" height="14" viewBox="0 0 16 14"><path d="M1 7.5L5.5 12.5L15 1.5" fill="none" stroke="#5cb85c" stroke-width="3" stroke-linejoin="round"/></svg>
<div class="lp" style="left:119px;top:248px;color:#333">0.0 &lt; 5.0 %</div>
<div class="lp" style="left:10px;top:264px;color:#333">LBA</div>
<div class="lp" style="left:119px;top:264px;color:#333">3.57</div>
<div class="lp" style="left:10px;top:280px;color:#333">GMNIA</div>
<svg class="a" style="left:94px;top:281px" width="16" height="14" viewBox="0 0 16 14"><path d="M1 7.5L5.5 12.5L15 1.5" fill="none" stroke="#5cb85c" stroke-width="3" stroke-linejoin="round"/></svg>
<div class="lp" style="left:119px;top:280px;color:#333">100.0 %</div>
<div class="lp" style="left:10px;top:296px;color:#333">GMNIA Plates</div>
<svg class="a" style="left:94px;top:297px" width="16" height="14" viewBox="0 0 16 14"><path d="M1 7.5L5.5 12.5L15 1.5" fill="none" stroke="#5cb85c" stroke-width="3" stroke-linejoin="round"/></svg>
<div class="lp" style="left:119px;top:296px;color:#333">0.2 &lt; 5.0 %</div>
<div class="redbox" style="left:7px;top:275px;width:184px;height:42px;border-radius:10px"></div>
<!-- right panel -->
<div class="redbox" style="left:1395px;top:204px;width:459px;height:269px;border-radius:14px;border-width:4px"></div>
<div class="lp" style="left:1402px;top:210px;color:#555">Applied loads</div>
<svg class="a" style="left:1487px;top:209px" width="16" height="14" viewBox="0 0 16 14"><path d="M1 7.5L5.5 12.5L15 1.5" fill="none" stroke="#1a9a1a" stroke-width="3" stroke-linejoin="round"/></svg>
<div class="lp" style="left:1513px;top:210px;color:#555">100.0 %</div>
<div class="a" style="left:1402px;top:243px;width:427px;height:222px;background:#f0f0f0;border:1px solid #c4c4c4"></div>
<div class="a" style="left:1402px;top:279px;width:427px;height:2px;background:#c8c8c8"></div>
<div class="a" style="left:1402px;top:308px;width:427px;height:2px;background:#c8c8c8"></div>
<div class="a" style="left:1402px;top:342px;width:427px;height:2px;background:#c8c8c8"></div>
<div class="a" style="left:1402px;top:371px;width:427px;height:2px;background:#c8c8c8"></div>
<div class="a" style="left:1402px;top:403px;width:427px;height:2px;background:#c8c8c8"></div>
<div class="a" style="left:1402px;top:431px;width:427px;height:2px;background:#c8c8c8"></div>
<div class="a" style="left:1431px;top:243px;width:2px;height:36px;background:#c8c8c8"></div>
<div class="a" style="left:1478px;top:243px;width:2px;height:36px;background:#c8c8c8"></div>
<div class="a" style="left:1604px;top:243px;width:2px;height:36px;background:#c8c8c8"></div>
<div class="a" style="left:1648px;top:243px;width:2px;height:36px;background:#c8c8c8"></div>
<div class="a" style="left:1693px;top:243px;width:2px;height:36px;background:#c8c8c8"></div>
<div class="a" style="left:1770px;top:243px;width:2px;height:36px;background:#c8c8c8"></div>
<div class="a" style="left:1431px;top:308px;width:2px;height:34px;background:#c8c8c8"></div>
<div class="a" style="left:1478px;top:308px;width:2px;height:34px;background:#c8c8c8"></div>
<div class="a" style="left:1604px;top:308px;width:2px;height:34px;background:#c8c8c8"></div>
<div class="a" style="left:1648px;top:308px;width:2px;height:34px;background:#c8c8c8"></div>
<div class="a" style="left:1693px;top:308px;width:2px;height:34px;background:#c8c8c8"></div>
<div class="a" style="left:1770px;top:308px;width:2px;height:34px;background:#c8c8c8"></div>
<div class="a" style="left:1431px;top:371px;width:2px;height:32px;background:#c8c8c8"></div>
<div class="a" style="left:1478px;top:371px;width:2px;height:32px;background:#c8c8c8"></div>
<div class="a" style="left:1604px;top:371px;width:2px;height:32px;background:#c8c8c8"></div>
<div class="a" style="left:1648px;top:371px;width:2px;height:32px;background:#c8c8c8"></div>
<div class="a" style="left:1693px;top:371px;width:2px;height:32px;background:#c8c8c8"></div>
<div class="a" style="left:1770px;top:371px;width:2px;height:32px;background:#c8c8c8"></div>
<div class="a" style="left:1431px;top:431px;width:2px;height:34px;background:#c8c8c8"></div>
<div class="a" style="left:1478px;top:431px;width:2px;height:34px;background:#c8c8c8"></div>
<div class="a" style="left:1604px;top:431px;width:2px;height:34px;background:#c8c8c8"></div>
<div class="a" style="left:1648px;top:431px;width:2px;height:34px;background:#c8c8c8"></div>
<div class="a" style="left:1693px;top:431px;width:2px;height:34px;background:#c8c8c8"></div>
<div class="a" style="left:1770px;top:431px;width:2px;height:34px;background:#c8c8c8"></div>
<div style="position:absolute;font-weight:bold;font-size:12px;color:#333;white-space:nowrap;left:1436px;top:255px">Status</div>
<div style="position:absolute;font-weight:bold;font-size:12px;color:#333;white-space:nowrap;left:1483px;top:255px">Item</div>
<div style="position:absolute;font-weight:bold;font-size:12px;color:#333;white-space:nowrap;left:1609px;top:247px;line-height:16px">Th.<br>[mm]</div>
<div style="position:absolute;font-weight:bold;font-size:12px;color:#333;white-space:nowrap;left:1653px;top:255px">Loads</div>
<div style="position:absolute;font-weight:bold;font-size:12px;color:#333;white-space:nowrap;left:1697px;top:255px">&sigma; <span style="font-size:10px;position:relative;top:3px">Ed</span> &nbsp;[MPa]</div>
<div style="position:absolute;font-weight:bold;font-size:12px;color:#333;white-space:nowrap;left:1774px;top:255px">&epsilon; <span style="font-size:10px;position:relative;top:3px">Pl</span> &nbsp;[%]</div>
<svg class="a" style="left:1413px;top:291px" width="9" height="7"><path d="M0 0H9L4.5 7Z" fill="#333"/></svg>
<div style="position:absolute;font-weight:bold;font-size:12px;color:#333;white-space:nowrap;left:1432px;top:287px">AM1</div>
<svg class="a" style="left:1413px;top:353px" width="9" height="7"><path d="M0 0H9L4.5 7Z" fill="#333"/></svg>
<div style="position:absolute;font-weight:bold;font-size:12px;color:#333;white-space:nowrap;left:1432px;top:349px">CON1</div>
<svg class="a" style="left:1413px;top:414px" width="9" height="7"><path d="M0 0H9L4.5 7Z" fill="#333"/></svg>
<div style="position:absolute;font-weight:bold;font-size:12px;color:#333;white-space:nowrap;left:1432px;top:410px">CON2</div>
<svg class="a" style="left:1447px;top:319px" width="16" height="14" viewBox="0 0 16 14"><path d="M1 7.5L5.5 12.5L15 1.5" fill="none" stroke="#5cb85c" stroke-width="3" stroke-linejoin="round"/></svg>
<div style="position:absolute;font-weight:bold;font-size:12px;color:#333;white-space:nowrap;left:1483px;top:318px">Top flange 1</div>
<div style="position:absolute;font-weight:bold;font-size:12px;color:#333;white-space:nowrap;left:1609px;top:318px">2</div>
<div style="position:absolute;font-weight:bold;font-size:12px;color:#333;white-space:nowrap;left:1653px;top:318px">LE1</div>
<div style="position:absolute;font-weight:bold;font-size:12px;color:#333;white-space:nowrap;left:1697px;top:318px">235.323</div>
<div style="position:absolute;font-weight:bold;font-size:12px;color:#333;white-space:nowrap;left:1774px;top:318px">0.2</div>
<svg class="a" style="left:1447px;top:381px" width="16" height="14" viewBox="0 0 16 14"><path d="M1 7.5L5.5 12.5L15 1.5" fill="none" stroke="#5cb85c" stroke-width="3" stroke-linejoin="round"/></svg>
<div style="position:absolute;font-weight:bold;font-size:12px;color:#333;white-space:nowrap;left:1483px;top:380px">Gusset plate (CPL1a)</div>
<div style="position:absolute;font-weight:bold;font-size:12px;color:#333;white-space:nowrap;left:1609px;top:380px">8</div>
<div style="position:absolute;font-weight:bold;font-size:12px;color:#333;white-space:nowrap;left:1653px;top:380px">LE1</div>
<div style="position:absolute;font-weight:bold;font-size:12px;color:#333;white-space:nowrap;left:1697px;top:380px">235.058</div>
<div style="position:absolute;font-weight:bold;font-size:12px;color:#333;white-space:nowrap;left:1774px;top:380px">0.0</div>
<svg class="a" style="left:1447px;top:442px" width="16" height="14" viewBox="0 0 16 14"><path d="M1 7.5L5.5 12.5L15 1.5" fill="none" stroke="#5cb85c" stroke-width="3" stroke-linejoin="round"/></svg>
<div style="position:absolute;font-weight:bold;font-size:12px;color:#333;white-space:nowrap;left:1483px;top:441px">Gusset plate (CPL1a)</div>
<div style="position:absolute;font-weight:bold;font-size:12px;color:#333;white-space:nowrap;left:1609px;top:441px">8</div>
<div style="position:absolute;font-weight:bold;font-size:12px;color:#333;white-space:nowrap;left:1653px;top:441px">LE1</div>
<div style="position:absolute;font-weight:bold;font-size:12px;color:#333;white-space:nowrap;left:1697px;top:441px">235.058</div>
<div style="position:absolute;font-weight:bold;font-size:12px;color:#333;white-space:nowrap;left:1774px;top:441px">0.0</div>
<div class="a" style="left:1402px;top:475px;width:186px;height:64px;background:#fff;border:2px solid #c8c8c8"></div>
<div class="a" style="left:1403px;top:476px;width:184px;height:32px;background:#f0f0f0"></div>
<div class="a" style="left:1402px;top:507px;width:186px;height:2px;background:#c8c8c8"></div>
<div class="a" style="left:1461px;top:475px;width:2px;height:64px;background:#c8c8c8"></div>
<div class="a" style="left:1521px;top:475px;width:2px;height:64px;background:#c8c8c8"></div>
<div style="position:absolute;font-weight:bold;font-size:12px;color:#333;white-space:nowrap;left:1407px;top:485px">Material</div>
<div style="position:absolute;font-weight:bold;font-size:12px;color:#333;white-space:nowrap;left:1466px;top:485px">fy [MPa]</div>
<div style="position:absolute;font-weight:bold;font-size:12px;color:#333;white-space:nowrap;left:1526px;top:485px">&epsilon; <span style="font-size:10px;position:relative;top:3px">lim</span> &nbsp;[%]</div>
<div class="lp" style="left:1407px;top:516px;color:#555">S 235</div>
<div class="lp" style="left:1466px;top:516px;color:#555">235.000</div>
<div class="lp" style="left:1526px;top:516px;color:#555">5.0</div>
<div class="a" style="left:25px;top:1011px;font-size:11.3px;font-weight:bold;color:#8a8a8a">Design code :</div>
<div class="a" style="left:107px;top:1011px;font-size:12px;font-weight:bold;color:#fff">EN</div>
<div class="a" style="left:168px;top:1011px;font-size:11.3px;font-weight:bold;color:#8a8a8a">Analysis type :</div>
<div class="a" style="left:256px;top:1011px;font-size:11.8px;font-weight:bold;color:#fff">Geometrically and materially non-linear analysis with imperfection</div>
</body></html>
